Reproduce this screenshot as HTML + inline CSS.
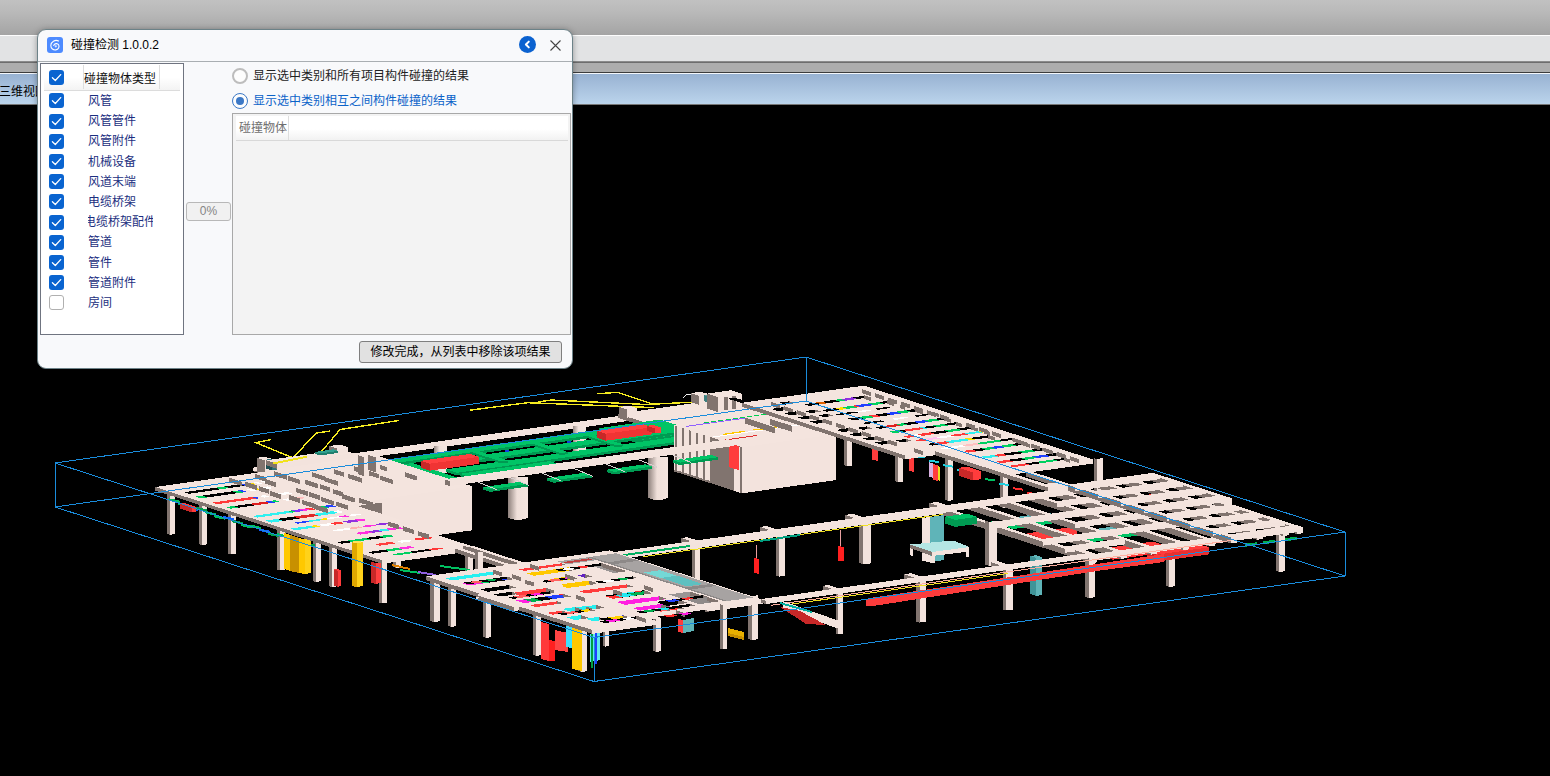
<!DOCTYPE html>
<html lang="zh-CN">
<head>
<meta charset="utf-8">
<title>碰撞检测</title>
<style>
*{box-sizing:border-box;margin:0;padding:0}
html,body{width:1550px;height:776px;overflow:hidden;background:#000;font-family:"Liberation Sans","Noto Sans CJK SC",sans-serif;font-size:12px;color:#000}
#bg-top{position:absolute;left:0;top:0;width:1550px;height:35px;background:linear-gradient(#c1c1c1,#b9b9b9 35%,#a4a4a4)}
#bg-l1{position:absolute;left:0;top:35px;width:1550px;height:1px;background:#fdfdfd}
#bg-strip{position:absolute;left:0;top:36px;width:1550px;height:26px;background:#e2e3e4}
#bg-l2{position:absolute;left:0;top:61px;width:1550px;height:2px;background:linear-gradient(#9a9a9a,#5f5f5f)}
#bg-band{position:absolute;left:0;top:63px;width:1550px;height:9px;background:#adadad}
#bg-l3{position:absolute;left:0;top:72px;width:1550px;height:1px;background:#3c3c3c}
#bg-l4{position:absolute;left:0;top:73px;width:1550px;height:1px;background:#f4f7fb}
#bg-tab{position:absolute;left:0;top:74px;width:1550px;height:30px;background:linear-gradient(#98b2d2,#bbd4ec)}
#bg-l5{position:absolute;left:0;top:104px;width:1550px;height:1px;background:#777}
#tabtxt{position:absolute;left:-1px;top:84px;font-size:12px;line-height:16px;white-space:nowrap;color:#000}
#model{position:absolute;left:0;top:0;width:1550px;height:776px}
#dlg{position:absolute;left:37px;top:29px;width:536px;height:340px;background:#f8f9fb;border:1px solid #6c8288;border-radius:9px;box-shadow:0 1px 6px rgba(0,0,0,.35);overflow:hidden}
#dlg .abs{position:absolute}
#tbar{left:0;top:0;width:534px;height:32px;border-bottom:1px solid #a9aeb2}
#ico{left:9px;top:7px;width:16px;height:16px}
#ttl{left:33px;top:7px;font-size:12px;line-height:16px;white-space:nowrap}
#back{left:481px;top:6px;width:17px;height:17px}
#cls{left:511px;top:9px;width:13px;height:13px}
#list{left:2px;top:33px;width:144px;height:272px;background:#fff;border:1px solid #6f7480}
#lhead{left:3px;top:1px;width:136px;height:26px;border-bottom:1px solid #dcdcdc;background:linear-gradient(#fff,#fff 50%,#f3f3f3)}
.vsep{position:absolute;top:0;width:1px;height:24px;background:#dedede}
.cb{position:absolute;left:8px;width:15px;height:15px;border-radius:3px;background:#0a64d0}
.cb.off{background:#fff;border:1px solid #b0b0b0}
.cb svg{position:absolute;left:0;top:0}
.lt{position:absolute;left:47px;font-size:12px;line-height:16px;color:#1c2f80;white-space:nowrap}
#pct{left:148px;top:172px;width:45px;height:19px;border:1px solid #b8b8b8;border-radius:3px;background:#f1f1f1;color:#858585;text-align:center;line-height:17px;font-size:12px}
.rd{position:absolute;left:194px;width:16px;height:16px;border-radius:50%;border:2px solid #bdbdbd;background:#fdfdfd}
.rd.on{border-color:#3b78c6;border-width:1.5px;background:#fdfdfd}
.rd.on i{position:absolute;left:2.5px;top:2.5px;width:8px;height:8px;border-radius:50%;background:#3b78c6}
.rt{position:absolute;left:215px;font-size:12px;line-height:16px;white-space:nowrap;color:#222}
#res{left:194px;top:83px;width:339px;height:222px;background:#f3f3f3;border:1px solid #a8a8a8}
#rhead{left:3px;top:2px;width:332px;height:25px;border-bottom:1px solid #d8d8d8;background:linear-gradient(#fff,#fff 55%,#f2f2f2)}
#rhead span{position:absolute;left:3px;top:4px;color:#6e6e6e;line-height:16px}
#btn{left:321px;top:311px;width:203px;height:22px;border:1px solid #7f7f7f;border-radius:3px;background:#e1e1e1;text-align:center;line-height:20px;font-size:12px;color:#000;white-space:nowrap}
</style>
</head>
<body>
<div id="bg-top"></div><div id="bg-l1"></div><div id="bg-strip"></div><div id="bg-l2"></div><div id="bg-band"></div><div id="bg-l3"></div><div id="bg-l4"></div><div id="bg-tab"></div><div id="bg-l5"></div>
<div id="tabtxt">三维视图</div>
<svg id="model" viewBox="0 0 1550 776" shape-rendering="crispEdges">
<defs><linearGradient id="cyl" x1="0" x2="1" y1="0" y2="0"><stop offset="0" stop-color="#8d807b"/><stop offset=".45" stop-color="#efe0da"/><stop offset="1" stop-color="#f4e5df"/></linearGradient></defs>
<polyline points="271.5,439.5 256.0,442.7 291.6,457.3" fill="none" stroke="#f6ec20" stroke-width="1.4"/>
<polyline points="330.3,431.0 316.6,433.0 292.4,458.0" fill="none" stroke="#f6ec20" stroke-width="1.4"/>
<polyline points="398.9,420.5 340.0,429.5 317.4,456.5" fill="none" stroke="#f6ec20" stroke-width="1.4"/>
<polyline points="278.7,461.3 317.4,456.5" fill="none" stroke="#f6ec20" stroke-width="2"/>
<polyline points="469.7,410.2 527.7,402.7 654.2,407.6" fill="none" stroke="#f6ec20" stroke-width="1.4"/>
<polyline points="538.0,402.0 551.0,400.0 646.5,404.5 695.5,402.0" fill="none" stroke="#f6ec20" stroke-width="1.4"/>
<polyline points="597.0,393.7 618.0,392.4 654.0,404.5" fill="none" stroke="#f6ec20" stroke-width="1.4"/>
<polyline points="683.0,398.0 686.0,395.0 694.0,394.0" fill="none" stroke="#eee" stroke-width="1"/>
<polygon points="365.0,451.8 370.0,453.4 370.0,457.4 365.0,455.8" fill="#81746f"/>
<polygon points="370.0,453.4 643.0,414.9 643.0,418.9 370.0,457.4" fill="#f3e3dd"/>
<polygon points="365.0,451.8 638.0,413.3 643.0,414.9 370.0,453.4" fill="#f4e4de"/>
<rect x="433.5" y="445.6" width="13.0" height="27.0" fill="url(#cyl)"/>
<ellipse cx="440.0" cy="472.6" rx="6.5" ry="1.8" fill="url(#cyl)"/>
<rect x="572.5" y="426.0" width="13.0" height="27.0" fill="url(#cyl)"/>
<ellipse cx="579.0" cy="453.0" rx="6.5" ry="1.8" fill="url(#cyl)"/>
<polygon points="618.0,413.8 728.0,398.3 728.0,402.3 618.0,417.8" fill="#f3e3dd"/>
<polygon points="728.0,398.3 753.0,406.3 753.0,410.3 728.0,402.3" fill="#81746f"/>
<polygon points="753.0,406.3 643.0,421.9 643.0,425.9 753.0,410.3" fill="#f3e3dd"/>
<polygon points="643.0,421.9 618.0,413.8 618.0,417.8 643.0,425.9" fill="#81746f"/>
<polygon points="618.0,413.8 728.0,398.3 753.0,406.3 643.0,421.9" fill="#f4e4de"/>
<polygon points="619.0,407.0 627.0,409.6 627.0,417.6 619.0,415.0" fill="#81746f"/>
<polygon points="627.0,409.6 637.0,408.2 637.0,416.2 627.0,417.6" fill="#f3e3dd"/>
<polygon points="619.0,407.0 629.0,405.6 637.0,408.2 627.0,409.6" fill="#f4e4de"/>
<polygon points="691.0,393.1 699.0,395.7 699.0,404.7 691.0,402.1" fill="#81746f"/>
<polygon points="699.0,395.7 709.0,394.3 709.0,403.3 699.0,404.7" fill="#f3e3dd"/>
<polygon points="691.0,393.1 701.0,391.7 709.0,394.3 699.0,395.7" fill="#f4e4de"/>
<polygon points="704.0,395.2 714.0,398.4 714.0,404.4 704.0,401.2" fill="#3f8080"/>
<polygon points="714.0,398.4 719.0,397.7 719.0,403.7 714.0,404.4" fill="#5fa0a0"/>
<polygon points="704.0,395.2 709.0,394.5 719.0,397.7 714.0,398.4" fill="#5fa0a0"/>
<polygon points="383.0,460.1 445.0,480.1 445.0,482.1 383.0,462.1" fill="#009a52"/>
<polygon points="445.0,480.1 459.0,478.1 459.0,480.1 445.0,482.1" fill="#009a52"/>
<polygon points="383.0,460.1 397.0,458.1 459.0,478.1 445.0,480.1" fill="#00c466"/>
<polygon points="383.0,460.1 393.0,463.3 393.0,465.8 383.0,462.6" fill="#009a52"/>
<polygon points="393.0,463.3 696.0,420.6 696.0,423.1 393.0,465.8" fill="#009a52"/>
<polygon points="383.0,460.1 686.0,417.3 696.0,420.6 393.0,463.3" fill="#00c466"/>
<polygon points="599.0,428.2 637.0,440.5 637.0,443.0 599.0,430.7" fill="#009a52"/>
<polygon points="637.0,440.5 717.0,429.2 717.0,431.7 637.0,443.0" fill="#009a52"/>
<polygon points="599.0,428.2 679.0,416.9 717.0,429.2 637.0,440.5" fill="#00c466"/>
<polygon points="429.0,462.4 439.0,465.6 439.0,468.1 429.0,464.9" fill="#009a52"/>
<polygon points="439.0,465.6 701.0,428.7 701.0,431.2 439.0,468.1" fill="#009a52"/>
<polygon points="429.0,462.4 691.0,425.4 701.0,428.7 439.0,465.6" fill="#00c466"/>
<polygon points="446.0,469.3 457.0,472.8 457.0,475.3 446.0,471.8" fill="#009a52"/>
<polygon points="457.0,472.8 712.0,436.8 712.0,439.3 457.0,475.3" fill="#009a52"/>
<polygon points="446.0,469.3 701.0,433.3 712.0,436.8 457.0,472.8" fill="#00c466"/>
<polygon points="460.0,473.8 468.0,476.4 468.0,478.9 460.0,476.3" fill="#009a52"/>
<polygon points="468.0,476.4 558.0,463.7 558.0,466.2 468.0,478.9" fill="#009a52"/>
<polygon points="460.0,473.8 550.0,461.1 558.0,463.7 468.0,476.4" fill="#00c466"/>
<polygon points="472.0,452.2 501.0,461.5 501.0,463.5 472.0,454.2" fill="#009a52"/>
<polygon points="501.0,461.5 508.0,460.5 508.0,462.5 501.0,463.5" fill="#009a52"/>
<polygon points="472.0,452.2 479.0,451.2 508.0,460.5 501.0,461.5" fill="#00c466"/>
<polygon points="532.0,443.7 561.0,453.1 561.0,455.1 532.0,445.7" fill="#009a52"/>
<polygon points="561.0,453.1 568.0,452.1 568.0,454.1 561.0,455.1" fill="#009a52"/>
<polygon points="532.0,443.7 539.0,442.7 568.0,452.1 561.0,453.1" fill="#00c466"/>
<polygon points="587.0,435.9 616.0,445.3 616.0,447.3 587.0,437.9" fill="#009a52"/>
<polygon points="616.0,445.3 623.0,444.3 623.0,446.3 616.0,447.3" fill="#009a52"/>
<polygon points="587.0,435.9 594.0,434.9 623.0,444.3 616.0,445.3" fill="#00c466"/>
<polygon points="437.0,459.5 441.0,459.5 441.0,461.5 437.0,461.5" fill="#1040e0"/>
<polygon points="505.0,449.9 509.0,449.9 509.0,451.9 505.0,451.9" fill="#1040e0"/>
<polygon points="567.0,441.1 571.0,441.1 571.0,443.1 567.0,443.1" fill="#1040e0"/>
<polygon points="630.0,432.3 634.0,432.3 634.0,434.3 630.0,434.3" fill="#1040e0"/>
<polygon points="675.0,425.9 679.0,425.9 679.0,427.9 675.0,427.9" fill="#1040e0"/>
<polygon points="421.0,460.8 430.0,463.7 430.0,470.7 421.0,467.8" fill="#c82828"/>
<polygon points="430.0,463.7 479.0,456.8 479.0,463.8 430.0,470.7" fill="#f03434"/>
<polygon points="421.0,460.8 470.0,453.9 479.0,456.8 430.0,463.7" fill="#ff4040"/>
<polygon points="597.0,430.8 606.0,433.7 606.0,440.7 597.0,437.8" fill="#c82828"/>
<polygon points="606.0,433.7 652.0,427.3 652.0,434.3 606.0,440.7" fill="#f03434"/>
<polygon points="597.0,430.8 643.0,424.3 652.0,427.3 606.0,433.7" fill="#ff4040"/>
<polygon points="347.0,487.7 382.0,499.0 382.0,543.0 347.0,531.7" fill="#81746f"/>
<polygon points="382.0,499.0 472.0,486.3 472.0,530.3 382.0,543.0" fill="#f3e3dd"/>
<polygon points="347.0,487.7 437.0,475.0 472.0,486.3 382.0,499.0" fill="#f4e4de"/>
<polygon points="167.0,489.9 169.8,490.8 169.8,534.8 167.0,533.9" fill="#81746f"/>
<polygon points="169.8,490.8 175.0,490.1 175.0,534.1 169.8,534.8" fill="#f3e3dd"/>
<polygon points="199.0,500.3 201.8,501.2 201.8,545.2 199.0,544.3" fill="#81746f"/>
<polygon points="201.8,501.2 207.0,500.4 207.0,544.4 201.8,545.2" fill="#f3e3dd"/>
<polygon points="228.0,509.6 230.8,510.5 230.8,554.5 228.0,553.6" fill="#81746f"/>
<polygon points="230.8,510.5 236.0,509.8 236.0,553.8 230.8,554.5" fill="#f3e3dd"/>
<polygon points="277.0,525.5 279.8,526.4 279.8,570.4 277.0,569.5" fill="#81746f"/>
<polygon points="279.8,526.4 285.0,525.6 285.0,569.6 279.8,570.4" fill="#f3e3dd"/>
<polygon points="313.0,537.1 315.8,538.0 315.8,582.0 313.0,581.1" fill="#81746f"/>
<polygon points="315.8,538.0 321.0,537.2 321.0,581.2 315.8,582.0" fill="#f3e3dd"/>
<polygon points="329.0,542.2 331.8,543.1 331.8,587.1 329.0,586.2" fill="#81746f"/>
<polygon points="331.8,543.1 337.0,542.4 337.0,586.4 331.8,587.1" fill="#f3e3dd"/>
<polygon points="379.0,558.4 381.8,559.3 381.8,603.3 379.0,602.4" fill="#81746f"/>
<polygon points="381.8,559.3 387.0,558.5 387.0,602.5 381.8,603.3" fill="#f3e3dd"/>
<polygon points="393.0,523.0 395.8,523.9 395.8,567.9 393.0,567.0" fill="#81746f"/>
<polygon points="395.8,523.9 401.0,523.2 401.0,567.2 395.8,567.9" fill="#f3e3dd"/>
<polygon points="465.0,546.2 467.8,547.1 467.8,591.1 465.0,590.2" fill="#81746f"/>
<polygon points="467.8,547.1 473.0,546.4 473.0,590.4 467.8,591.1" fill="#f3e3dd"/>
<polyline points="169.0,499.5 180.0,502.0" fill="none" stroke="#00c060" stroke-width="2.5"/>
<polyline points="178.0,503.4 189.0,505.9" fill="none" stroke="#00c060" stroke-width="2.5"/>
<polyline points="187.0,507.3 198.0,509.8" fill="none" stroke="#1060ff" stroke-width="2.5"/>
<polyline points="196.0,508.2 207.0,510.7" fill="none" stroke="#00a050" stroke-width="2.5"/>
<polyline points="205.0,512.1 216.0,514.6" fill="none" stroke="#00c060" stroke-width="2.5"/>
<polyline points="214.0,516.0 225.0,518.5" fill="none" stroke="#00c060" stroke-width="2.5"/>
<polyline points="223.0,517.0 234.0,519.5" fill="none" stroke="#1060ff" stroke-width="2.5"/>
<polyline points="232.0,520.9 243.0,523.4" fill="none" stroke="#00a050" stroke-width="2.5"/>
<polyline points="241.0,524.8 252.0,527.3" fill="none" stroke="#00c060" stroke-width="2.5"/>
<polyline points="250.0,525.7 261.0,528.2" fill="none" stroke="#00c060" stroke-width="2.5"/>
<polyline points="259.0,529.6 270.0,532.1" fill="none" stroke="#1060ff" stroke-width="2.5"/>
<polyline points="268.0,533.5 279.0,536.0" fill="none" stroke="#00a050" stroke-width="2.5"/>
<polyline points="277.0,534.4 288.0,536.9" fill="none" stroke="#00c060" stroke-width="2.5"/>
<polyline points="286.0,538.3 297.0,540.8" fill="none" stroke="#00c060" stroke-width="2.5"/>
<polyline points="295.0,542.2 306.0,544.7" fill="none" stroke="#1060ff" stroke-width="2.5"/>
<polyline points="304.0,543.1 315.0,545.6" fill="none" stroke="#00a050" stroke-width="2.5"/>
<polygon points="180.0,503.5 192.0,507.4 192.0,512.4 180.0,508.5" fill="#c82828"/>
<polygon points="192.0,507.4 196.0,506.8 196.0,511.8 192.0,512.4" fill="#ff3c3c"/>
<polygon points="180.0,503.5 184.0,503.0 196.0,506.8 192.0,507.4" fill="#ff3c3c"/>
<polygon points="284.0,533.0 290.0,535.0 290.0,571.0 284.0,569.0" fill="#ffc800"/>
<polygon points="290.0,535.0 299.0,538.0 299.0,573.0 290.0,571.0" fill="#c89000"/>
<polygon points="299.0,538.0 305.0,539.5 305.0,574.0 299.0,573.0" fill="#ffc800"/>
<polygon points="305.0,539.5 311.0,538.5 311.0,573.0 305.0,574.0" fill="#ffd21a"/>
<polygon points="371.0,562.0 376.0,563.0 376.0,584.0 371.0,583.0" fill="#c82828"/>
<polygon points="376.0,563.0 380.6,562.0 380.6,583.0 376.0,584.0" fill="#ff4040"/>
<polygon points="334.0,569.4 338.0,570.7 338.0,586.7 334.0,585.4" fill="#c82828"/>
<polygon points="338.0,570.7 341.0,570.3 341.0,586.3 338.0,586.7" fill="#ff3c3c"/>
<polygon points="334.0,569.4 337.0,569.0 341.0,570.3 338.0,570.7" fill="#ff3c3c"/>
<polygon points="155.0,487.0 265.0,471.5 265.0,475.0 155.0,490.5" fill="#f3e3dd"/>
<polygon points="265.0,471.5 253.0,467.6 253.0,471.1 265.0,475.0" fill="#81746f"/>
<polygon points="253.0,467.6 365.0,451.8 365.0,455.3 253.0,471.1" fill="#f3e3dd"/>
<polygon points="365.0,451.8 472.0,486.3 472.0,489.8 365.0,455.3" fill="#81746f"/>
<polygon points="472.0,486.3 350.0,503.6 350.0,507.1 472.0,489.8" fill="#f3e3dd"/>
<polygon points="350.0,503.6 405.0,521.3 405.0,524.8 350.0,507.1" fill="#81746f"/>
<polygon points="405.0,521.3 398.0,522.3 398.0,525.8 405.0,524.8" fill="#f3e3dd"/>
<polygon points="398.0,522.3 475.0,547.2 475.0,550.7 398.0,525.8" fill="#81746f"/>
<polygon points="475.0,547.2 382.0,560.3 382.0,563.8 475.0,550.7" fill="#f3e3dd"/>
<polygon points="382.0,560.3 155.0,487.0 155.0,490.5 382.0,563.8" fill="#81746f"/>
<polygon points="155.0,487.0 265.0,471.5 253.0,467.6 365.0,451.8 472.0,486.3 350.0,503.6 405.0,521.3 398.0,522.3 475.0,547.2 382.0,560.3" fill="#f4e4de"/>
<polygon points="184.0,492.2 215.8,487.7 220.8,489.3 189.0,493.8" fill="#000"/>
<polygon points="215.8,487.7 224.9,486.4 229.9,488.0 220.8,489.3" fill="#00d060"/>
<polygon points="224.9,486.4 240.4,484.2 245.4,485.8 229.9,488.0" fill="#000"/>
<polygon points="240.4,484.2 244.1,483.7 249.1,485.3 245.4,485.8" fill="#2040ff"/>
<polygon points="247.7,483.2 251.3,482.7 256.3,484.3 252.7,484.8" fill="#ffe000"/>
<polygon points="253.2,482.4 256.8,481.9 261.8,483.5 258.2,484.0" fill="#ffffff"/>
<polygon points="260.4,481.4 265.9,480.6 270.9,482.2 265.4,483.0" fill="#ffffff"/>
<polygon points="195.0,496.7 202.4,495.6 207.9,497.4 200.5,498.4" fill="#00d060"/>
<polygon points="202.4,495.6 232.2,491.4 237.7,493.2 207.9,497.4" fill="#000"/>
<polygon points="232.2,491.4 237.8,490.6 243.3,492.4 237.7,493.2" fill="#00d060"/>
<polygon points="237.8,490.6 241.5,490.1 247.0,491.9 243.3,492.4" fill="#2040ff"/>
<polygon points="246.2,489.4 250.8,488.8 256.3,490.6 251.7,491.2" fill="#ffffff"/>
<polygon points="253.6,488.4 256.4,488.0 261.9,489.8 259.1,490.2" fill="#ffe000"/>
<polygon points="260.1,487.5 267.5,486.4 273.0,488.2 265.6,489.3" fill="#ffffff"/>
<polygon points="212.0,502.6 251.5,497.0 256.5,498.7 217.0,504.2" fill="#ff3838"/>
<polygon points="251.5,497.0 255.2,496.5 260.2,498.1 256.5,498.7" fill="#2040ff"/>
<polygon points="259.0,496.0 264.6,495.2 269.6,496.8 264.0,497.6" fill="#ffffff"/>
<polygon points="268.4,494.7 272.2,494.1 277.2,495.7 273.4,496.3" fill="#ffb0b0"/>
<polygon points="277.8,493.3 287.2,492.0 292.2,493.6 282.8,494.9" fill="#ffffff"/>
<polygon points="226.0,507.1 233.5,506.1 238.5,507.7 231.0,508.7" fill="#00d060"/>
<polygon points="233.5,506.1 249.5,503.8 254.5,505.4 238.5,507.7" fill="#000"/>
<polygon points="249.5,503.8 265.5,501.6 270.5,503.2 254.5,505.4" fill="#e02020"/>
<polygon points="265.5,501.6 270.2,500.9 275.2,502.5 270.5,503.2" fill="#2040ff"/>
<polygon points="270.2,500.9 274.9,500.2 279.9,501.9 275.2,502.5" fill="#00d060"/>
<polygon points="282.4,499.2 288.0,498.4 293.0,500.0 287.4,500.8" fill="#ffffff"/>
<polygon points="293.7,497.6 301.2,496.5 306.2,498.1 298.7,499.2" fill="#ffc0c0"/>
<polygon points="252.0,516.0 287.6,511.0 292.6,512.6 257.0,517.6" fill="#30f0f0"/>
<polygon points="287.6,511.0 291.5,510.4 296.5,512.0 292.6,512.6" fill="#00d060"/>
<polygon points="291.5,510.4 299.4,509.3 304.4,510.9 296.5,512.0" fill="#8030ff"/>
<polygon points="299.4,509.3 305.7,508.4 310.7,510.0 304.4,510.9" fill="#ff30e0"/>
<polygon points="305.7,508.4 310.5,507.7 315.5,509.4 310.7,510.0" fill="#ff3838"/>
<polygon points="315.2,507.1 323.1,506.0 328.1,507.6 320.2,508.7" fill="#00d060"/>
<polygon points="323.1,506.0 331.0,504.8 336.0,506.5 328.1,507.6" fill="#2040ff"/>
<polygon points="265.0,520.7 277.0,519.0 283.0,520.9 271.0,522.6" fill="#30f0f0"/>
<polygon points="277.0,519.0 293.0,516.7 299.0,518.6 283.0,520.9" fill="#000"/>
<polygon points="293.0,516.7 313.0,513.9 319.0,515.8 299.0,518.6" fill="#e02828"/>
<polygon points="313.0,513.9 333.0,511.1 339.0,513.0 319.0,515.8" fill="#30f0f0"/>
<polygon points="333.0,511.1 338.6,510.3 344.6,512.2 339.0,513.0" fill="#ffffff"/>
<polygon points="294.0,522.6 306.8,520.8 310.3,521.9 297.5,523.7" fill="#2040ff"/>
<polygon points="306.8,520.8 319.6,519.0 323.1,520.1 310.3,521.9" fill="#30f0f0"/>
<polygon points="319.6,519.0 326.0,518.1 329.5,519.2 323.1,520.1" fill="#ffe000"/>
<polygon points="326.0,518.1 338.8,516.3 342.3,517.4 329.5,519.2" fill="#ffffff"/>
<polygon points="338.8,516.3 345.2,515.4 348.7,516.5 342.3,517.4" fill="#ff30e0"/>
<polygon points="348.4,514.9 358.0,513.6 361.5,514.7 351.9,516.0" fill="#ffffff"/>
<polygon points="290.0,528.7 310.0,525.9 315.0,527.5 295.0,530.3" fill="#30f0f0"/>
<polygon points="310.0,525.9 315.6,525.1 320.6,526.7 315.0,527.5" fill="#ffe000"/>
<polygon points="318.8,524.7 330.0,523.1 335.0,524.7 323.8,526.3" fill="#ffffff"/>
<polygon points="330.0,523.1 339.6,521.7 344.6,523.3 335.0,524.7" fill="#ff3838"/>
<polygon points="342.8,521.3 354.0,519.7 359.0,521.3 347.8,522.9" fill="#9030e0"/>
<polygon points="354.0,519.7 362.0,518.6 367.0,520.2 359.0,521.3" fill="#ff30e0"/>
<polygon points="332.0,530.2 348.2,527.9 352.2,529.2 336.0,531.5" fill="#ffffff"/>
<polygon points="348.2,527.9 359.0,526.4 363.0,527.7 352.2,529.2" fill="#ffb0b0"/>
<polygon points="361.7,526.0 372.5,524.5 376.5,525.8 365.7,527.3" fill="#ff30e0"/>
<polygon points="375.2,524.1 386.0,522.6 390.0,523.9 379.2,525.4" fill="#9030e0"/>
<polygon points="355.0,533.0 368.2,531.1 373.2,532.8 360.0,534.6" fill="#ff30e0"/>
<polygon points="368.2,531.1 377.0,529.9 382.0,531.5 373.2,532.8" fill="#9030e0"/>
<polygon points="377.0,529.9 385.8,528.7 390.8,530.3 382.0,531.5" fill="#30f0f0"/>
<polygon points="385.8,528.7 399.0,526.8 404.0,528.4 390.8,530.3" fill="#ff30e0"/>
<polygon points="337.0,542.0 347.4,540.6 352.4,542.2 342.0,543.7" fill="#000"/>
<polygon points="347.4,540.6 365.6,538.0 370.6,539.6 352.4,542.2" fill="#00d060"/>
<polygon points="365.6,538.0 378.6,536.2 383.6,537.8 370.6,539.6" fill="#000"/>
<polygon points="378.6,536.2 389.0,534.7 394.0,536.3 383.6,537.8" fill="#00d060"/>
<polygon points="375.0,544.1 391.2,541.8 396.2,543.4 380.0,545.7" fill="#ff4040"/>
<polygon points="396.6,541.1 407.4,539.5 412.4,541.1 401.6,542.7" fill="#ffffff"/>
<polygon points="412.8,538.8 429.0,536.5 434.0,538.1 417.8,540.4" fill="#ff3838"/>
<polygon points="368.0,552.0 384.8,549.7 389.8,551.3 373.0,553.7" fill="#000"/>
<polygon points="384.8,549.7 397.4,547.9 402.4,549.5 389.8,551.3" fill="#00d060"/>
<polygon points="397.4,547.9 410.0,546.1 415.0,547.7 402.4,549.5" fill="#ff30e0"/>
<polygon points="392.0,554.2 410.0,551.7 414.0,553.0 396.0,555.5" fill="#00d060"/>
<polygon points="410.0,551.7 428.0,549.1 432.0,550.4 414.0,553.0" fill="#000"/>
<polygon points="428.0,549.1 440.0,547.5 444.0,548.7 432.0,550.4" fill="#ff3838"/>
<polygon points="228.9,477.5 241.5,481.6 241.5,486.1 228.9,482.0" fill="#81746f"/>
<polygon points="245.2,481.7 256.7,485.4 256.7,489.9 245.2,486.2" fill="#81746f"/>
<polygon points="259.0,486.2 269.2,489.5 269.2,494.0 259.0,490.7" fill="#81746f"/>
<polygon points="270.4,491.1 280.8,494.5 280.8,499.0 270.4,495.6" fill="#81746f"/>
<polygon points="289.0,495.0 299.5,498.4 299.5,502.9 289.0,499.5" fill="#81746f"/>
<polygon points="301.8,499.7 315.6,504.1 315.6,508.6 301.8,504.2" fill="#81746f"/>
<polygon points="314.4,504.4 328.3,508.9 328.3,513.4 314.4,508.9" fill="#81746f"/>
<polygon points="255.2,473.8 266.3,477.4 266.3,481.9 255.2,478.3" fill="#81746f"/>
<polygon points="264.7,478.9 275.9,482.6 275.9,487.1 264.7,483.4" fill="#81746f"/>
<polygon points="295.5,487.6 308.0,491.6 308.0,496.1 295.5,492.1" fill="#81746f"/>
<polygon points="309.3,492.1 319.5,495.4 319.5,499.9 309.3,496.6" fill="#81746f"/>
<polygon points="321.2,496.9 334.0,501.1 334.0,505.6 321.2,501.4" fill="#81746f"/>
<polygon points="335.9,501.4 348.2,505.4 348.2,509.9 335.9,505.9" fill="#81746f"/>
<polygon points="273.8,471.2 287.0,475.4 287.0,479.9 273.8,475.7" fill="#81746f"/>
<polygon points="287.5,475.7 299.8,479.7 299.8,484.2 287.5,480.2" fill="#81746f"/>
<polygon points="305.3,479.7 318.2,483.9 318.2,488.4 305.3,484.2" fill="#81746f"/>
<polygon points="319.9,484.1 330.4,487.5 330.4,492.0 319.9,488.6" fill="#81746f"/>
<polygon points="332.5,488.9 343.2,492.3 343.2,496.8 332.5,493.4" fill="#81746f"/>
<polygon points="342.2,494.0 354.9,498.1 354.9,502.6 342.2,498.5" fill="#81746f"/>
<polygon points="359.4,498.0 372.9,502.4 372.9,506.9 359.4,502.5" fill="#81746f"/>
<polygon points="312.2,472.2 324.5,476.2 324.5,480.7 312.2,476.7" fill="#81746f"/>
<polygon points="324.7,477.0 338.1,481.3 338.1,485.8 324.7,481.5" fill="#81746f"/>
<polygon points="334.0,469.2 344.2,472.5 344.2,477.0 334.0,473.7" fill="#81746f"/>
<polygon points="347.9,473.7 361.9,478.2 361.9,482.7 347.9,478.2" fill="#81746f"/>
<polygon points="354.3,466.3 367.0,470.4 367.0,474.9 354.3,470.8" fill="#81746f"/>
<polygon points="368.8,470.8 379.4,474.2 379.4,478.7 368.8,475.3" fill="#81746f"/>
<polygon points="380.4,475.6 393.4,479.8 393.4,484.3 380.4,480.1" fill="#81746f"/>
<polygon points="375.5,463.3 387.0,467.0 387.0,471.5 375.5,467.8" fill="#81746f"/>
<polygon points="404.7,472.2 416.9,476.1 416.9,480.6 404.7,476.7" fill="#81746f"/>
<polygon points="388.0,521.4 399.0,524.9 399.0,529.4 388.0,525.9" fill="#81746f"/>
<polygon points="403.0,526.2 414.0,529.8 414.0,534.3 403.0,530.7" fill="#81746f"/>
<polygon points="418.0,531.1 429.0,534.6 429.0,539.1 418.0,535.6" fill="#81746f"/>
<polygon points="463.0,545.6 474.0,549.1 474.0,553.6 463.0,550.1" fill="#81746f"/>
<polygon points="351.5,542.0 357.0,543.0 357.0,587.0 351.5,586.0" fill="#e0a800"/>
<polygon points="357.0,543.0 363.0,542.0 363.0,586.0 357.0,587.0" fill="#ffd21a"/>
<polygon points="351.5,542.0 357.0,540.5 363.0,542.0 357.0,543.5" fill="#ffe060"/>
<polygon points="257.0,457.8 265.0,460.4 265.0,472.4 257.0,469.8" fill="#81746f"/>
<polygon points="265.0,460.4 273.0,459.3 273.0,471.3 265.0,472.4" fill="#f3e3dd"/>
<polygon points="257.0,457.8 265.0,456.7 273.0,459.3 265.0,460.4" fill="#f4e4de"/>
<polygon points="266.0,459.6 272.0,461.5 272.0,470.5 266.0,468.6" fill="#1f5055"/>
<polygon points="272.0,461.5 277.0,460.8 277.0,469.8 272.0,470.5" fill="#2e7076"/>
<polygon points="266.0,459.6 271.0,458.8 277.0,460.8 272.0,461.5" fill="#2e7076"/>
<polygon points="266.0,460.3 277.0,463.9 277.0,468.9 266.0,465.3" fill="#81746f"/>
<polygon points="277.0,463.9 353.0,453.1 353.0,458.1 277.0,468.9" fill="#f3e3dd"/>
<polygon points="266.0,460.3 342.0,449.6 353.0,453.1 277.0,463.9" fill="#f4e4de"/>
<polygon points="329.0,446.0 337.0,448.6 337.0,453.6 329.0,451.0" fill="#81746f"/>
<polygon points="337.0,448.6 348.0,447.1 348.0,452.1 337.0,453.6" fill="#f3e3dd"/>
<polygon points="329.0,446.0 340.0,444.5 348.0,447.1 337.0,448.6" fill="#f4e4de"/>
<polygon points="358.0,455.2 364.0,457.1 364.0,476.1 358.0,474.2" fill="#81746f"/>
<polygon points="364.0,457.1 368.0,456.6 368.0,475.6 364.0,476.1" fill="#f3e3dd"/>
<polygon points="368.0,454.8 376.0,457.4 376.0,472.4 368.0,469.8" fill="#81746f"/>
<polygon points="376.0,457.4 380.0,456.8 380.0,471.8 376.0,472.4" fill="#f3e3dd"/>
<polyline points="273.0,463.5 307.0,456.8" fill="none" stroke="#f2e21c" stroke-width="2"/>
<polygon points="315.0,451.9 320.0,453.5 320.0,455.5 315.0,453.9" fill="#208070"/>
<polygon points="320.0,453.5 338.0,450.9 338.0,452.9 320.0,455.5" fill="#208070"/>
<polygon points="315.0,451.9 333.0,449.3 338.0,450.9 320.0,453.5" fill="#30a090"/>
<polygon points="660.0,419.5 753.0,406.3 771.0,412.1 678.0,425.3" fill="#f4e4de"/>
<polygon points="674.0,425.4 742.0,447.3 742.0,493.3 674.0,471.4" fill="#81746f"/>
<polygon points="742.0,447.3 836.0,434.1 836.0,480.1 742.0,493.3" fill="#f3e3dd"/>
<polygon points="674.0,425.4 768.0,412.1 836.0,434.1 742.0,447.3" fill="#f4e4de"/>
<polygon points="674.0,425.4 711.0,437.3 711.0,481.3 674.0,469.4" fill="#f3e3dd"/>
<polygon points="675.0,425.7 676.5,426.2 676.5,470.2 675.0,469.7" fill="#81746f"/>
<polygon points="682.0,427.9 683.5,428.4 683.5,472.4 682.0,471.9" fill="#81746f"/>
<polygon points="689.0,430.2 690.5,430.7 690.5,474.7 689.0,474.2" fill="#81746f"/>
<polygon points="696.0,432.5 697.5,433.0 697.5,477.0 696.0,476.5" fill="#81746f"/>
<polygon points="703.0,434.7 704.5,435.2 704.5,479.2 703.0,478.7" fill="#81746f"/>
<polygon points="710.0,437.0 711.5,437.5 711.5,481.5 710.0,481.0" fill="#81746f"/>
<polygon points="734.0,444.7 740.0,446.7 740.0,492.7 734.0,490.7" fill="#f3e3dd"/>
<polygon points="707.0,393.6 718.0,397.2 718.0,412.2 707.0,408.6" fill="#81746f"/>
<polygon points="718.0,397.2 742.0,393.8 742.0,408.8 718.0,412.2" fill="#f3e3dd"/>
<polygon points="707.0,393.6 731.0,390.2 742.0,393.8 718.0,397.2" fill="#f4e4de"/>
<polygon points="724.0,397.3 728.0,396.8 728.0,409.8 724.0,410.3" fill="#81746f"/>
<polygon points="732.0,396.2 736.0,395.6 736.0,408.6 732.0,409.2" fill="#81746f"/>
<polygon points="728.0,398.7 735.0,397.7 763.0,406.8 756.0,407.8" fill="#000"/>
<polygon points="729.0,443.1 739.0,446.3 739.0,470.3 729.0,467.1" fill="#ff3c3c"/>
<polygon points="685.0,426.1 745.0,417.7 747.0,418.3 687.0,426.8" fill="#9060ff"/>
<polygon points="703.0,422.7 768.0,413.5 769.5,414.0 704.5,423.2" fill="#00d050"/>
<polygon points="721.0,434.0 743.0,430.9 746.0,431.9 724.0,435.0" fill="#ffc800"/>
<polygon points="753.0,429.5 778.0,426.0 781.0,427.0 756.0,430.5" fill="#ffc800"/>
<polyline points="713.0,437.0 803.0,424.3" fill="none" stroke="#fff" stroke-width="1"/>
<polyline points="723.0,440.3 757.0,435.5" fill="none" stroke="#e03030" stroke-width="1"/>
<polygon points="647.0,425.8 655.0,428.4 655.0,433.4 647.0,430.8" fill="#c82828"/>
<polygon points="655.0,428.4 661.0,427.5 661.0,432.5 655.0,433.4" fill="#ff3c3c"/>
<polygon points="647.0,425.8 653.0,424.9 661.0,427.5 655.0,428.4" fill="#ff3c3c"/>
<polygon points="745.0,417.7 775.0,427.4 775.0,433.4 745.0,423.7" fill="#81746f"/>
<polygon points="770.0,418.8 792.0,425.9 792.0,431.9 770.0,424.8" fill="#81746f"/>
<rect x="508.0" y="476.9" width="20.0" height="40.0" fill="url(#cyl)"/>
<ellipse cx="518.0" cy="516.9" rx="10.0" ry="2.8" fill="url(#cyl)"/>
<rect x="648.0" y="457.1" width="20.0" height="40.0" fill="url(#cyl)"/>
<ellipse cx="658.0" cy="497.1" rx="10.0" ry="2.8" fill="url(#cyl)"/>
<polygon points="483.0,487.1 490.0,489.4 490.0,491.9 483.0,489.6" fill="#009a52"/>
<polygon points="490.0,489.4 528.0,484.0 528.0,486.5 490.0,491.9" fill="#009a52"/>
<polygon points="483.0,487.1 521.0,481.7 528.0,484.0 490.0,489.4" fill="#00c466"/>
<polygon points="547.0,478.1 554.0,480.3 554.0,482.8 547.0,480.6" fill="#009a52"/>
<polygon points="554.0,480.3 592.0,475.0 592.0,477.5 554.0,482.8" fill="#009a52"/>
<polygon points="547.0,478.1 585.0,472.7 592.0,475.0 554.0,480.3" fill="#00c466"/>
<polygon points="607.0,469.6 614.0,471.9 614.0,474.4 607.0,472.1" fill="#009a52"/>
<polygon points="614.0,471.9 652.0,466.5 652.0,469.0 614.0,474.4" fill="#009a52"/>
<polygon points="607.0,469.6 645.0,464.3 652.0,466.5 614.0,471.9" fill="#00c466"/>
<polygon points="673.0,460.3 680.0,462.6 680.0,465.1 673.0,462.8" fill="#009a52"/>
<polygon points="680.0,462.6 718.0,457.2 718.0,459.7 680.0,465.1" fill="#009a52"/>
<polygon points="673.0,460.3 711.0,454.9 718.0,457.2 680.0,462.6" fill="#00c466"/>
<polyline points="475.0,480.8 497.0,489.8" fill="none" stroke="#d8d0d0" stroke-width="1"/>
<polyline points="507.0,476.3 529.0,485.3" fill="none" stroke="#d8d0d0" stroke-width="1"/>
<polyline points="539.0,471.8 561.0,480.8" fill="none" stroke="#d8d0d0" stroke-width="1"/>
<polyline points="571.0,467.3 593.0,476.3" fill="none" stroke="#d8d0d0" stroke-width="1"/>
<polyline points="603.0,462.8 625.0,471.8" fill="none" stroke="#d8d0d0" stroke-width="1"/>
<polyline points="635.0,458.2 657.0,467.2" fill="none" stroke="#d8d0d0" stroke-width="1"/>
<polyline points="669.0,453.4 691.0,462.4" fill="none" stroke="#d8d0d0" stroke-width="1"/>
<polygon points="444.5,479.3 450.0,481.1 450.0,486.1 444.5,484.3" fill="#81746f"/>
<polygon points="450.0,481.1 734.0,441.0 734.0,446.0 450.0,486.1" fill="#f3e3dd"/>
<polygon points="444.5,479.3 728.5,439.2 734.0,441.0 450.0,481.1" fill="#f4e4de"/>
<polygon points="844.4,421.2 847.2,422.1 847.2,466.1 844.4,465.2" fill="#81746f"/>
<polygon points="847.2,422.1 852.4,421.4 852.4,465.4 847.2,466.1" fill="#f3e3dd"/>
<polygon points="895.2,437.3 898.0,438.2 898.0,482.2 895.2,481.3" fill="#81746f"/>
<polygon points="898.0,438.2 903.2,437.5 903.2,481.5 898.0,482.2" fill="#f3e3dd"/>
<polygon points="945.2,456.0 948.0,456.9 948.0,500.9 945.2,500.0" fill="#81746f"/>
<polygon points="948.0,456.9 953.2,456.2 953.2,500.2 948.0,500.9" fill="#f3e3dd"/>
<polygon points="1000.0,463.0 1002.8,463.9 1002.8,507.9 1000.0,507.0" fill="#81746f"/>
<polygon points="1002.8,463.9 1008.0,463.2 1008.0,507.2 1002.8,507.9" fill="#f3e3dd"/>
<polygon points="872.0,448.0 878.0,449.5 878.0,461.0 872.0,459.5" fill="#ff3c3c"/>
<polygon points="909.0,457.0 914.0,458.5 914.0,472.0 909.0,470.5" fill="#ff3c3c"/>
<polygon points="929.0,462.0 933.0,463.5 933.0,478.0 929.0,476.5" fill="#d8b0e0"/>
<polygon points="933.0,464.0 938.0,465.5 938.0,481.0 933.0,479.5" fill="#ff3c3c"/>
<polygon points="938.0,466.0 940.0,467.5 940.0,481.0 938.0,479.5" fill="#e8e020"/>
<polyline points="915.0,456.0 925.0,457.5" fill="none" stroke="#20d0e0" stroke-width="2"/>
<polyline points="929.0,460.6 939.0,462.1" fill="none" stroke="#20d0e0" stroke-width="2"/>
<polyline points="943.0,465.2 953.0,466.7" fill="none" stroke="#20d0e0" stroke-width="2"/>
<polyline points="957.0,469.8 967.0,471.3" fill="none" stroke="#20d0e0" stroke-width="2"/>
<polyline points="971.0,474.4 981.0,475.9" fill="none" stroke="#00c060" stroke-width="2"/>
<polyline points="985.0,479.0 995.0,480.5" fill="none" stroke="#00c060" stroke-width="2"/>
<polyline points="999.0,483.6 1009.0,485.1" fill="none" stroke="#20d0e0" stroke-width="2"/>
<polyline points="1013.0,488.2 1023.0,489.7" fill="none" stroke="#ff3030" stroke-width="2"/>
<polyline points="1027.0,492.8 1037.0,494.3" fill="none" stroke="#ff3030" stroke-width="2"/>
<polygon points="959.0,467.8 973.0,472.4 973.0,480.4 959.0,475.8" fill="#c82828"/>
<polygon points="973.0,472.4 981.0,471.2 981.0,479.2 973.0,480.4" fill="#ff3c3c"/>
<polygon points="959.0,467.8 967.0,466.7 981.0,471.2 973.0,472.4" fill="#ff3c3c"/>
<polygon points="742.0,402.8 864.0,385.6 864.0,389.6 742.0,406.8" fill="#f3e3dd"/>
<polygon points="864.0,385.6 1093.0,459.5 1093.0,463.5 864.0,389.6" fill="#81746f"/>
<polygon points="1093.0,459.5 1001.0,472.5 1001.0,476.5 1093.0,463.5" fill="#f3e3dd"/>
<polygon points="1001.0,472.5 935.0,451.2 935.0,455.2 1001.0,476.5" fill="#81746f"/>
<polygon points="935.0,451.2 905.0,455.4 905.0,459.4 935.0,455.2" fill="#f3e3dd"/>
<polygon points="905.0,455.4 742.0,402.8 742.0,406.8 905.0,459.4" fill="#81746f"/>
<polygon points="742.0,402.8 864.0,385.6 1093.0,459.5 1001.0,472.5 935.0,451.2 905.0,455.4" fill="#f4e4de"/>
<polygon points="804.0,404.2 816.2,402.5 821.3,404.2 809.1,405.9" fill="#000"/>
<polygon points="816.2,402.5 822.3,401.7 827.4,403.3 821.3,404.2" fill="#e06000"/>
<polygon points="822.3,401.7 834.5,399.9 839.6,401.6 827.4,403.3" fill="#000"/>
<polygon points="834.5,399.9 840.6,399.1 845.7,400.7 839.6,401.6" fill="#00d060"/>
<polygon points="840.6,399.1 852.8,397.3 857.9,399.0 845.7,400.7" fill="#9030e0"/>
<polygon points="852.8,397.3 865.1,395.6 870.2,397.3 857.9,399.0" fill="#000"/>
<polygon points="864.1,395.3 871.1,397.6 871.1,401.1 864.1,398.8" fill="#81746f"/>
<polygon points="822.0,410.1 835.3,408.2 840.4,409.8 827.1,411.7" fill="#000"/>
<polygon points="835.3,408.2 841.9,407.2 847.0,408.9 840.4,409.8" fill="#ffe000"/>
<polygon points="841.9,407.2 851.9,405.8 857.0,407.5 847.0,408.9" fill="#00d060"/>
<polygon points="851.9,405.8 855.2,405.4 860.3,407.0 857.0,407.5" fill="#ff3838"/>
<polygon points="855.2,405.4 868.5,403.5 873.6,405.1 860.3,407.0" fill="#2040ff"/>
<polygon points="868.5,403.5 878.5,402.1 883.6,403.7 873.6,405.1" fill="#00d060"/>
<polygon points="878.5,402.1 888.4,400.7 893.5,402.3 883.6,403.7" fill="#000"/>
<polygon points="887.4,400.4 894.4,402.6 894.4,406.1 887.4,403.9" fill="#81746f"/>
<polygon points="835.0,414.2 854.7,411.5 858.1,412.6 838.4,415.3" fill="#000"/>
<polygon points="854.7,411.5 867.9,409.6 871.3,410.7 858.1,412.6" fill="#ffffff"/>
<polygon points="874.5,408.7 887.6,406.8 891.0,407.9 877.9,409.8" fill="#000"/>
<polygon points="899.8,404.6 904.8,406.3 904.8,409.8 899.8,408.1" fill="#81746f"/>
<polygon points="848.0,418.4 858.3,417.0 863.8,418.8 853.5,420.2" fill="#000"/>
<polygon points="858.3,417.0 868.5,415.5 874.0,417.3 863.8,418.8" fill="#00d060"/>
<polygon points="868.5,415.5 875.3,414.6 880.9,416.4 874.0,417.3" fill="#ff3838"/>
<polygon points="875.3,414.6 885.6,413.1 891.1,414.9 880.9,416.4" fill="#000"/>
<polygon points="885.6,413.1 895.9,411.7 901.4,413.5 891.1,414.9" fill="#2040ff"/>
<polygon points="895.9,411.7 906.1,410.2 911.6,412.0 901.4,413.5" fill="#00d060"/>
<polygon points="906.1,410.2 916.4,408.8 921.9,410.6 911.6,412.0" fill="#000"/>
<polygon points="915.4,408.5 922.9,410.9 922.9,414.4 915.4,412.0" fill="#81746f"/>
<polygon points="862.0,423.0 880.3,420.4 883.7,421.5 865.4,424.1" fill="#000"/>
<polygon points="891.4,418.8 906.0,416.7 909.4,417.8 894.8,419.9" fill="#ffffff"/>
<polygon points="913.4,415.7 935.4,412.6 938.8,413.7 916.8,416.8" fill="#000"/>
<polygon points="934.4,412.3 939.4,413.9 939.4,417.4 934.4,415.8" fill="#81746f"/>
<polygon points="875.0,427.2 882.0,426.2 887.1,427.8 880.1,428.8" fill="#000"/>
<polygon points="882.0,426.2 896.0,424.2 901.1,425.8 887.1,427.8" fill="#e02020"/>
<polygon points="896.0,424.2 903.0,423.2 908.1,424.9 901.1,425.8" fill="#00d060"/>
<polygon points="903.0,423.2 913.5,421.7 918.6,423.4 908.1,424.9" fill="#000"/>
<polygon points="913.5,421.7 924.0,420.2 929.1,421.9 918.6,423.4" fill="#2040ff"/>
<polygon points="924.0,420.2 934.5,418.8 939.6,420.4 929.1,421.9" fill="#00d060"/>
<polygon points="934.5,418.8 945.0,417.3 950.1,418.9 939.6,420.4" fill="#000"/>
<polygon points="944.0,417.0 951.0,419.2 951.0,422.7 944.0,420.5" fill="#81746f"/>
<polygon points="889.0,431.7 899.2,430.2 903.8,431.8 893.7,433.2" fill="#00d060"/>
<polygon points="899.2,430.2 902.5,429.8 907.2,431.3 903.8,431.8" fill="#000"/>
<polygon points="902.5,429.8 919.5,427.4 924.1,428.9 907.2,431.3" fill="#ff3838"/>
<polygon points="919.5,427.4 922.9,426.9 927.5,428.4 924.1,428.9" fill="#30f0f0"/>
<polygon points="922.9,426.9 933.0,425.5 937.7,427.0 927.5,428.4" fill="#000"/>
<polygon points="933.0,425.5 943.2,424.0 947.8,425.5 937.7,427.0" fill="#00d060"/>
<polygon points="943.2,424.0 956.7,422.1 961.4,423.6 947.8,425.5" fill="#000"/>
<polygon points="955.7,421.8 962.2,423.9 962.2,427.4 955.7,425.3" fill="#81746f"/>
<polygon points="903.0,436.2 911.3,435.0 916.4,436.7 908.1,437.8" fill="#ff3838"/>
<polygon points="911.3,435.0 916.8,434.2 921.9,435.9 916.4,436.7" fill="#ffffff"/>
<polygon points="916.8,434.2 930.6,432.3 935.7,433.9 921.9,435.9" fill="#ff3838"/>
<polygon points="930.6,432.3 944.4,430.4 949.5,432.0 935.7,433.9" fill="#000"/>
<polygon points="944.4,430.4 956.8,428.6 961.9,430.2 949.5,432.0" fill="#00d060"/>
<polygon points="956.8,428.6 972.0,426.5 977.1,428.1 961.9,430.2" fill="#000"/>
<polygon points="971.0,426.1 978.0,428.4 978.0,431.9 971.0,429.6" fill="#81746f"/>
<polygon points="915.0,440.1 922.0,439.1 926.2,440.5 919.2,441.4" fill="#ff3838"/>
<polygon points="925.5,438.6 935.9,437.1 940.2,438.5 929.7,440.0" fill="#ffc0f0"/>
<polygon points="935.9,437.1 949.9,435.1 954.1,436.5 940.2,438.5" fill="#ffffff"/>
<polygon points="949.9,435.1 963.9,433.2 968.1,434.5 954.1,436.5" fill="#ff3838"/>
<polygon points="963.9,433.2 977.8,431.2 982.1,432.6 968.1,434.5" fill="#30f0f0"/>
<polygon points="977.8,431.2 984.8,430.2 989.0,431.6 982.1,432.6" fill="#ffe000"/>
<polygon points="983.8,429.9 989.8,431.8 989.8,435.3 983.8,433.4" fill="#81746f"/>
<polygon points="927.0,443.9 933.2,443.1 938.3,444.7 932.1,445.6" fill="#000"/>
<polygon points="933.2,443.1 945.5,441.3 950.6,443.0 938.3,444.7" fill="#ff3838"/>
<polygon points="945.5,441.3 957.9,439.6 963.0,441.2 950.6,443.0" fill="#30f0f0"/>
<polygon points="957.9,439.6 965.3,438.5 970.4,440.2 963.0,441.2" fill="#30f0f0"/>
<polygon points="965.3,438.5 970.2,437.9 975.3,439.5 970.4,440.2" fill="#ffe000"/>
<polygon points="970.2,437.9 988.7,435.2 993.8,436.9 975.3,439.5" fill="#000"/>
<polygon points="987.7,434.9 994.7,437.2 994.7,440.7 987.7,438.4" fill="#81746f"/>
<polygon points="940.0,448.1 961.8,445.1 966.1,446.4 944.2,449.5" fill="#ffffff"/>
<polygon points="961.8,445.1 976.3,443.0 980.6,444.4 966.1,446.4" fill="#ffc0c0"/>
<polygon points="976.3,443.0 998.2,439.9 1002.4,441.3 980.6,444.4" fill="#00d060"/>
<polygon points="998.2,439.9 1012.7,437.9 1016.9,439.3 1002.4,441.3" fill="#000"/>
<polygon points="1011.7,437.6 1017.7,439.5 1017.7,443.0 1011.7,441.1" fill="#81746f"/>
<polygon points="963.0,450.9 972.2,449.6 977.3,451.3 968.1,452.6" fill="#ff3838"/>
<polygon points="972.2,449.6 981.3,448.3 986.4,450.0 977.3,451.3" fill="#000"/>
<polygon points="981.3,448.3 990.5,447.0 995.6,448.7 986.4,450.0" fill="#00d060"/>
<polygon points="990.5,447.0 999.7,445.8 1004.8,447.4 995.6,448.7" fill="#2040ff"/>
<polygon points="999.7,445.8 1011.9,444.0 1017.0,445.7 1004.8,447.4" fill="#00d060"/>
<polygon points="1011.9,444.0 1024.1,442.3 1029.2,443.9 1017.0,445.7" fill="#000"/>
<polygon points="1023.1,442.0 1030.1,444.2 1030.1,447.7 1023.1,445.5" fill="#81746f"/>
<polygon points="981.0,456.7 993.5,455.0 998.6,456.6 986.1,458.4" fill="#30f0f0"/>
<polygon points="993.5,455.0 1002.8,453.7 1007.9,455.3 998.6,456.6" fill="#ff3838"/>
<polygon points="1002.8,453.7 1018.4,451.5 1023.5,453.1 1007.9,455.3" fill="#000"/>
<polygon points="1018.4,451.5 1030.9,449.7 1036.0,451.3 1023.5,453.1" fill="#00d060"/>
<polygon points="1030.9,449.7 1043.4,447.9 1048.5,449.6 1036.0,451.3" fill="#000"/>
<polygon points="1042.4,447.6 1049.4,449.9 1049.4,453.4 1042.4,451.1" fill="#81746f"/>
<polygon points="996.0,461.6 1008.3,459.8 1013.4,461.5 1001.1,463.2" fill="#ff3838"/>
<polygon points="1008.3,459.8 1020.5,458.1 1025.6,459.8 1013.4,461.5" fill="#000"/>
<polygon points="1020.5,458.1 1032.8,456.4 1037.9,458.0 1025.6,459.8" fill="#00d060"/>
<polygon points="1032.8,456.4 1045.1,454.7 1050.2,456.3 1037.9,458.0" fill="#2040ff"/>
<polygon points="1045.1,454.7 1057.4,452.9 1062.5,454.6 1050.2,456.3" fill="#000"/>
<polygon points="1056.4,452.6 1063.4,454.9 1063.4,458.4 1056.4,456.1" fill="#81746f"/>
<polygon points="1009.0,465.8 1025.8,463.4 1030.1,464.8 1013.2,467.1" fill="#ff3838"/>
<polygon points="1025.8,463.4 1037.1,461.8 1041.3,463.2 1030.1,464.8" fill="#000"/>
<polygon points="1037.1,461.8 1053.9,459.4 1058.1,460.8 1041.3,463.2" fill="#00d060"/>
<polygon points="1053.9,459.4 1065.1,457.9 1069.4,459.2 1058.1,460.8" fill="#000"/>
<polygon points="1064.1,457.5 1070.1,459.5 1070.1,463.0 1064.1,461.0" fill="#81746f"/>
<polygon points="862.0,389.1 871.0,392.0 871.0,396.0 862.0,393.1" fill="#81746f"/>
<polygon points="771.0,401.9 780.0,404.8 780.0,408.8 771.0,405.9" fill="#81746f"/>
<polygon points="875.0,393.3 884.0,396.2 884.0,400.2 875.0,397.3" fill="#81746f"/>
<polygon points="784.0,406.1 793.0,409.0 793.0,413.0 784.0,410.1" fill="#81746f"/>
<polygon points="888.0,397.5 897.0,400.4 897.0,404.4 888.0,401.5" fill="#81746f"/>
<polygon points="797.0,410.3 806.0,413.2 806.0,417.2 797.0,414.3" fill="#81746f"/>
<polygon points="901.0,401.7 910.0,404.6 910.0,408.6 901.0,405.7" fill="#81746f"/>
<polygon points="810.0,414.5 819.0,417.4 819.0,421.4 810.0,418.5" fill="#81746f"/>
<polygon points="914.0,405.9 923.0,408.8 923.0,412.8 914.0,409.9" fill="#81746f"/>
<polygon points="823.0,418.7 832.0,421.6 832.0,425.6 823.0,422.7" fill="#81746f"/>
<polygon points="927.0,410.1 936.0,413.0 936.0,417.0 927.0,414.1" fill="#81746f"/>
<polygon points="836.0,422.9 845.0,425.8 845.0,429.8 836.0,426.9" fill="#81746f"/>
<polygon points="940.0,414.3 949.0,417.2 949.0,421.2 940.0,418.3" fill="#81746f"/>
<polygon points="849.0,427.1 858.0,430.0 858.0,434.0 849.0,431.1" fill="#81746f"/>
<polygon points="862.0,431.3 871.0,434.2 871.0,438.2 862.0,435.3" fill="#81746f"/>
<polygon points="966.0,422.7 975.0,425.6 975.0,429.6 966.0,426.7" fill="#81746f"/>
<polygon points="875.0,435.5 884.0,438.4 884.0,442.4 875.0,439.5" fill="#81746f"/>
<polygon points="979.0,426.9 988.0,429.8 988.0,433.8 979.0,430.9" fill="#81746f"/>
<polygon points="888.0,439.7 897.0,442.6 897.0,446.6 888.0,443.7" fill="#81746f"/>
<polygon points="992.0,431.1 1001.0,434.0 1001.0,438.0 992.0,435.1" fill="#81746f"/>
<polygon points="914.0,448.1 923.0,451.0 923.0,455.0 914.0,452.1" fill="#81746f"/>
<polygon points="1018.0,439.5 1027.0,442.4 1027.0,446.4 1018.0,443.5" fill="#81746f"/>
<polygon points="1031.0,443.7 1040.0,446.6 1040.0,450.6 1031.0,447.7" fill="#81746f"/>
<polygon points="1044.0,447.8 1053.0,450.8 1053.0,454.8 1044.0,451.8" fill="#81746f"/>
<polygon points="1057.0,452.0 1066.0,454.9 1066.0,458.9 1057.0,456.0" fill="#81746f"/>
<polygon points="1070.0,456.2 1079.0,459.1 1079.0,463.1 1070.0,460.2" fill="#81746f"/>
<polygon points="779.0,402.7 789.0,401.3 795.0,403.2 785.0,404.6" fill="#000"/>
<polygon points="789.0,401.3 789.0,404.0 795.0,403.2" fill="#81746f"/>
<polygon points="771.0,408.9 783.0,407.2 790.0,409.5 778.0,411.2" fill="#000"/>
<polygon points="783.0,407.2 783.0,410.2 783.5,410.4 790.0,409.5" fill="#81746f"/>
<polygon points="784.0,413.1 796.0,411.4 803.0,413.7 791.0,415.4" fill="#000"/>
<polygon points="796.0,411.4 796.0,414.4 796.5,414.6 803.0,413.7" fill="#81746f"/>
<polygon points="805.0,411.1 815.0,409.6 821.0,411.6 811.0,413.0" fill="#000"/>
<polygon points="815.0,409.6 815.0,412.4 821.0,411.6" fill="#81746f"/>
<polygon points="797.0,417.3 809.0,415.6 816.0,417.9 804.0,419.5" fill="#000"/>
<polygon points="809.0,415.6 809.0,418.6 809.5,418.8 816.0,417.9" fill="#81746f"/>
<polygon points="818.0,415.3 828.0,413.8 834.0,415.8 824.0,417.2" fill="#000"/>
<polygon points="828.0,413.8 828.0,416.6 834.0,415.8" fill="#81746f"/>
<polygon points="810.0,421.5 822.0,419.8 829.0,422.1 817.0,423.7" fill="#000"/>
<polygon points="822.0,419.8 822.0,422.8 822.5,423.0 829.0,422.1" fill="#81746f"/>
<polygon points="836.0,429.9 848.0,428.2 855.0,430.4 843.0,432.1" fill="#000"/>
<polygon points="848.0,428.2 848.0,431.2 848.5,431.4 855.0,430.4" fill="#81746f"/>
<polygon points="857.0,427.8 867.0,426.4 873.0,428.4 863.0,429.8" fill="#000"/>
<polygon points="867.0,426.4 867.0,429.2 873.0,428.4" fill="#81746f"/>
<polygon points="849.0,434.1 861.0,432.4 868.0,434.6 856.0,436.3" fill="#000"/>
<polygon points="861.0,432.4 861.0,435.4 861.5,435.6 868.0,434.6" fill="#81746f"/>
<polygon points="862.0,438.3 874.0,436.6 881.0,438.8 869.0,440.5" fill="#000"/>
<polygon points="874.0,436.6 874.0,439.6 874.5,439.8 881.0,438.8" fill="#81746f"/>
<polygon points="875.0,442.5 887.0,440.8 894.0,443.0 882.0,444.7" fill="#000"/>
<polygon points="887.0,440.8 887.0,443.8 887.5,443.9 894.0,443.0" fill="#81746f"/>
<polygon points="896.0,440.4 906.0,439.0 912.0,441.0 902.0,442.4" fill="#000"/>
<polygon points="906.0,439.0 906.0,441.8 912.0,441.0" fill="#81746f"/>
<polygon points="1093.5,458.0 1096.7,459.0 1096.7,503.0 1093.5,502.0" fill="#81746f"/>
<polygon points="1096.7,459.0 1102.5,458.2 1102.5,502.2 1096.7,503.0" fill="#f3e3dd"/>
<polygon points="1166.0,542.0 1169.2,543.0 1169.2,587.0 1166.0,586.0" fill="#81746f"/>
<polygon points="1169.2,543.0 1175.0,542.2 1175.0,586.2 1169.2,587.0" fill="#f3e3dd"/>
<polygon points="1276.0,527.0 1279.2,528.0 1279.2,572.0 1276.0,571.0" fill="#81746f"/>
<polygon points="1279.2,528.0 1285.0,527.2 1285.0,571.2 1279.2,572.0" fill="#f3e3dd"/>
<polygon points="1085.0,553.0 1088.2,554.0 1088.2,598.0 1085.0,597.0" fill="#81746f"/>
<polygon points="1088.2,554.0 1094.0,553.2 1094.0,597.2 1088.2,598.0" fill="#f3e3dd"/>
<polygon points="1001.0,472.5 1024.0,469.2 1024.0,473.2 1001.0,476.5" fill="#f3e3dd"/>
<polygon points="1024.0,469.2 1071.0,484.4 1071.0,488.4 1024.0,473.2" fill="#81746f"/>
<polygon points="1071.0,484.4 1048.0,487.6 1048.0,491.6 1071.0,488.4" fill="#f3e3dd"/>
<polygon points="1048.0,487.6 1001.0,472.5 1001.0,476.5 1048.0,491.6" fill="#81746f"/>
<polygon points="1001.0,472.5 1024.0,469.2 1071.0,484.4 1048.0,487.6" fill="#f4e4de"/>
<polygon points="1015.0,474.2 1026.0,472.7 1056.0,482.3 1045.0,483.9" fill="#000"/>
<polygon points="1026.0,472.7 1026.0,476.7 1047.4,483.6 1056.0,482.3" fill="#81746f"/>
<polygon points="1027.0,533.3 1037.0,536.5 1037.0,544.5 1027.0,541.3" fill="#c82828"/>
<polygon points="1037.0,536.5 1077.0,530.8 1077.0,538.8 1037.0,544.5" fill="#ff3c3c"/>
<polygon points="1027.0,533.3 1067.0,527.6 1077.0,530.8 1037.0,536.5" fill="#ff3c3c"/>
<polygon points="1103.0,548.5 1113.0,551.7 1113.0,559.7 1103.0,556.5" fill="#c82828"/>
<polygon points="1113.0,551.7 1163.0,544.7 1163.0,552.7 1113.0,559.7" fill="#ff3c3c"/>
<polygon points="1103.0,548.5 1153.0,541.5 1163.0,544.7 1113.0,551.7" fill="#ff3c3c"/>
<polygon points="1147.0,551.4 1157.0,554.7 1157.0,561.7 1147.0,558.4" fill="#c82828"/>
<polygon points="1157.0,554.7 1209.0,547.3 1209.0,554.3 1157.0,561.7" fill="#e83030"/>
<polygon points="1147.0,551.4 1199.0,544.1 1209.0,547.3 1157.0,554.7" fill="#ff3c3c"/>
<polygon points="1003.0,518.9 1048.0,512.5 1056.0,515.1 1011.0,521.4" fill="#5fb4b8"/>
<polygon points="1083.0,530.8 1123.0,525.1 1131.0,527.7 1091.0,533.4" fill="#5fb4b8"/>
<polygon points="1006.0,526.8 1051.0,520.4 1058.0,522.7 1013.0,529.1" fill="#00c466"/>
<polygon points="1083.0,540.1 1133.0,533.0 1140.0,535.3 1090.0,542.3" fill="#00c466"/>
<polygon points="975.0,523.7 995.0,520.9 1001.0,522.9 981.0,525.7" fill="#00c466"/>
<polygon points="1030.0,556.0 1036.0,558.0 1036.0,596.0 1030.0,594.0" fill="#3f9498"/>
<polygon points="1036.0,558.0 1042.0,557.1 1042.0,595.1 1036.0,596.0" fill="#5fb4b8"/>
<polygon points="1030.0,556.0 1036.0,555.2 1042.0,557.1 1036.0,558.0" fill="#5fb4b8"/>
<polygon points="935.0,506.8 1091.0,557.2 1091.0,563.2 935.0,512.8" fill="#81746f"/>
<polygon points="1091.0,557.2 1096.5,556.4 1096.5,562.4 1091.0,563.2" fill="#f3e3dd"/>
<polygon points="965.0,502.6 1121.0,553.0 1121.0,559.0 965.0,508.6" fill="#81746f"/>
<polygon points="1121.0,553.0 1126.5,552.2 1126.5,558.2 1121.0,559.0" fill="#f3e3dd"/>
<polygon points="995.0,498.4 1151.0,548.7 1151.0,554.7 995.0,504.4" fill="#81746f"/>
<polygon points="1151.0,548.7 1156.5,547.9 1156.5,553.9 1151.0,554.7" fill="#f3e3dd"/>
<polygon points="1027.0,493.9 1183.0,544.2 1183.0,550.2 1027.0,499.9" fill="#81746f"/>
<polygon points="1183.0,544.2 1188.5,543.4 1188.5,549.4 1183.0,550.2" fill="#f3e3dd"/>
<polygon points="1053.0,490.2 1209.0,540.5 1209.0,546.5 1053.0,496.2" fill="#81746f"/>
<polygon points="1209.0,540.5 1214.5,539.8 1214.5,545.8 1209.0,546.5" fill="#f3e3dd"/>
<polygon points="941.0,508.8 1081.0,489.0 1081.0,493.0 941.0,512.8" fill="#f3e3dd"/>
<polygon points="935.0,506.8 941.0,508.8 941.0,512.8 935.0,510.8" fill="#81746f"/>
<polygon points="991.0,524.9 1131.0,505.2 1131.0,509.2 991.0,528.9" fill="#f3e3dd"/>
<polygon points="985.0,523.0 991.0,524.9 991.0,528.9 985.0,527.0" fill="#81746f"/>
<polygon points="1043.0,541.7 1183.0,521.9 1183.0,525.9 1043.0,545.7" fill="#f3e3dd"/>
<polygon points="1037.0,539.8 1043.0,541.7 1043.0,545.7 1037.0,543.8" fill="#81746f"/>
<polygon points="1091.0,557.2 1231.0,537.4 1231.0,541.4 1091.0,561.2" fill="#f3e3dd"/>
<polygon points="1085.0,555.3 1091.0,557.2 1091.0,561.2 1085.0,559.3" fill="#81746f"/>
<polygon points="1075.0,524.2 1155.0,512.9 1155.0,516.9 1075.0,528.2" fill="#f3e3dd"/>
<polygon points="1070.0,522.6 1075.0,524.2 1075.0,528.2 1070.0,526.6" fill="#81746f"/>
<polygon points="1065.0,548.8 1125.0,540.3 1125.0,544.3 1065.0,552.8" fill="#f3e3dd"/>
<polygon points="1060.0,547.2 1065.0,548.8 1065.0,552.8 1060.0,551.2" fill="#81746f"/>
<polygon points="1057.0,503.5 1105.0,496.8 1105.0,500.8 1057.0,507.5" fill="#f3e3dd"/>
<polygon points="1052.0,501.9 1057.0,503.5 1057.0,507.5 1052.0,505.9" fill="#81746f"/>
<polygon points="935.0,506.8 940.5,506.1 1096.5,556.4 1091.0,557.2" fill="#f4e4de"/>
<polygon points="965.0,502.6 970.5,501.8 1126.5,552.2 1121.0,553.0" fill="#f4e4de"/>
<polygon points="995.0,498.4 1000.5,497.6 1156.5,547.9 1151.0,548.7" fill="#f4e4de"/>
<polygon points="1027.0,493.9 1032.5,493.1 1188.5,543.4 1183.0,544.2" fill="#f4e4de"/>
<polygon points="1053.0,490.2 1058.5,489.4 1214.5,539.8 1209.0,540.5" fill="#f4e4de"/>
<polygon points="935.0,506.8 1075.0,487.1 1081.0,489.0 941.0,508.8" fill="#f4e4de"/>
<polygon points="985.0,523.0 1125.0,503.2 1131.0,505.2 991.0,524.9" fill="#f4e4de"/>
<polygon points="1037.0,539.8 1177.0,520.0 1183.0,521.9 1043.0,541.7" fill="#f4e4de"/>
<polygon points="1085.0,555.3 1225.0,535.5 1231.0,537.4 1091.0,557.2" fill="#f4e4de"/>
<polygon points="1070.0,522.6 1150.0,511.3 1155.0,512.9 1075.0,524.2" fill="#f4e4de"/>
<polygon points="1060.0,547.2 1120.0,538.7 1125.0,540.3 1065.0,548.8" fill="#f4e4de"/>
<polygon points="1052.0,501.9 1100.0,495.2 1105.0,496.8 1057.0,503.5" fill="#f4e4de"/>
<polygon points="1100.0,491.2 1135.0,486.3 1139.0,487.5 1104.0,492.5" fill="#00c060"/>
<polygon points="1127.0,497.6 1167.0,491.9 1171.0,493.2 1131.0,498.9" fill="#ff3c3c"/>
<polygon points="1165.0,504.3 1208.0,498.2 1212.0,499.5 1169.0,505.6" fill="#ff20e0"/>
<polygon points="1165.0,514.5 1205.0,508.8 1209.0,510.1 1169.0,515.8" fill="#ffe000"/>
<polygon points="1207.0,509.5 1229.0,506.4 1233.0,507.7 1211.0,510.8" fill="#ff3c3c"/>
<polygon points="1195.0,521.9 1240.0,515.5 1244.0,516.8 1199.0,523.1" fill="#00c060"/>
<polygon points="1211.0,530.3 1253.0,524.3 1257.0,525.6 1215.0,531.6" fill="#ff3c3c"/>
<polygon points="1257.0,525.6 1275.0,523.1 1279.0,524.4 1261.0,526.9" fill="#20e0f0"/>
<polygon points="1068.0,484.8 1231.0,537.4 1231.0,543.4 1068.0,490.8" fill="#81746f"/>
<polygon points="1231.0,537.4 1237.0,536.6 1237.0,542.6 1231.0,543.4" fill="#f3e3dd"/>
<polygon points="1094.0,481.2 1257.0,533.8 1257.0,539.8 1094.0,487.2" fill="#81746f"/>
<polygon points="1257.0,533.8 1263.0,532.9 1263.0,538.9 1257.0,539.8" fill="#f3e3dd"/>
<polygon points="1120.0,477.5 1283.0,530.1 1283.0,536.1 1120.0,483.5" fill="#81746f"/>
<polygon points="1283.0,530.1 1289.0,529.3 1289.0,535.3 1283.0,536.1" fill="#f3e3dd"/>
<polygon points="1147.0,473.7 1226.0,499.2 1226.0,505.2 1147.0,479.7" fill="#81746f"/>
<polygon points="1226.0,499.2 1232.0,498.3 1232.0,504.3 1226.0,505.2" fill="#f3e3dd"/>
<polygon points="1213.0,501.0 1297.0,528.1 1297.0,534.1 1213.0,507.0" fill="#81746f"/>
<polygon points="1297.0,528.1 1303.0,527.3 1303.0,533.3 1297.0,534.1" fill="#f3e3dd"/>
<polygon points="1075.0,487.1 1160.0,475.1 1160.0,479.1 1075.0,491.1" fill="#f3e3dd"/>
<polygon points="1068.0,484.8 1075.0,487.1 1075.0,491.1 1068.0,488.8" fill="#81746f"/>
<polygon points="1098.0,494.5 1183.0,482.5 1183.0,486.5 1098.0,498.5" fill="#f3e3dd"/>
<polygon points="1091.0,492.2 1098.0,494.5 1098.0,498.5 1091.0,496.2" fill="#81746f"/>
<polygon points="1121.0,501.9 1206.0,489.9 1206.0,493.9 1121.0,505.9" fill="#f3e3dd"/>
<polygon points="1114.0,499.7 1121.0,501.9 1121.0,505.9 1114.0,503.7" fill="#81746f"/>
<polygon points="1144.0,509.4 1229.0,497.4 1229.0,501.4 1144.0,513.4" fill="#f3e3dd"/>
<polygon points="1137.0,507.1 1144.0,509.4 1144.0,513.4 1137.0,511.1" fill="#81746f"/>
<polygon points="1167.0,516.8 1239.0,506.6 1239.0,510.6 1167.0,520.8" fill="#f3e3dd"/>
<polygon points="1160.0,514.5 1167.0,516.8 1167.0,520.8 1160.0,518.5" fill="#81746f"/>
<polygon points="1190.0,524.2 1262.0,514.0 1262.0,518.0 1190.0,528.2" fill="#f3e3dd"/>
<polygon points="1183.0,521.9 1190.0,524.2 1190.0,528.2 1183.0,525.9" fill="#81746f"/>
<polygon points="1213.0,531.6 1285.0,521.5 1285.0,525.5 1213.0,535.6" fill="#f3e3dd"/>
<polygon points="1206.0,529.4 1213.0,531.6 1213.0,535.6 1206.0,533.4" fill="#81746f"/>
<polygon points="1231.0,537.4 1303.0,527.3 1303.0,531.3 1231.0,541.4" fill="#f3e3dd"/>
<polygon points="1224.0,535.2 1231.0,537.4 1231.0,541.4 1224.0,539.2" fill="#81746f"/>
<polygon points="1068.0,484.8 1074.0,484.0 1237.0,536.6 1231.0,537.4" fill="#f4e4de"/>
<polygon points="1094.0,481.2 1100.0,480.3 1263.0,532.9 1257.0,533.8" fill="#f4e4de"/>
<polygon points="1120.0,477.5 1126.0,476.6 1289.0,529.3 1283.0,530.1" fill="#f4e4de"/>
<polygon points="1147.0,473.7 1153.0,472.8 1232.0,498.3 1226.0,499.2" fill="#f4e4de"/>
<polygon points="1213.0,501.0 1219.0,500.2 1303.0,527.3 1297.0,528.1" fill="#f4e4de"/>
<polygon points="1068.0,484.8 1153.0,472.8 1160.0,475.1 1075.0,487.1" fill="#f4e4de"/>
<polygon points="1091.0,492.2 1176.0,480.3 1183.0,482.5 1098.0,494.5" fill="#f4e4de"/>
<polygon points="1114.0,499.7 1199.0,487.7 1206.0,489.9 1121.0,501.9" fill="#f4e4de"/>
<polygon points="1137.0,507.1 1222.0,495.1 1229.0,497.4 1144.0,509.4" fill="#f4e4de"/>
<polygon points="1160.0,514.5 1232.0,504.4 1239.0,506.6 1167.0,516.8" fill="#f4e4de"/>
<polygon points="1183.0,521.9 1255.0,511.8 1262.0,514.0 1190.0,524.2" fill="#f4e4de"/>
<polygon points="1206.0,529.4 1278.0,519.2 1285.0,521.5 1213.0,531.6" fill="#f4e4de"/>
<polygon points="1224.0,535.2 1296.0,525.0 1303.0,527.3 1231.0,537.4" fill="#f4e4de"/>
<polygon points="1230.0,497.7 1232.0,498.3 1231.0,504.0 1219.0,500.2" fill="#f4e4de"/>
<polyline points="1245.0,545.3 1257.0,543.8" fill="none" stroke="#00b050" stroke-width="3"/>
<polyline points="1263.0,542.8 1275.0,541.3" fill="none" stroke="#00b050" stroke-width="3"/>
<polyline points="1285.0,539.7 1297.0,538.2" fill="none" stroke="#00b050" stroke-width="3"/>
<polygon points="455.0,548.6 509.0,566.0 509.0,570.0 455.0,552.6" fill="#81746f"/>
<polygon points="509.0,566.0 514.0,565.3 514.0,569.3 509.0,570.0" fill="#f3e3dd"/>
<polygon points="455.0,548.6 460.0,547.9 514.0,565.3 509.0,566.0" fill="#f4e4de"/>
<polygon points="468.0,546.7 522.0,564.2 522.0,568.2 468.0,550.7" fill="#81746f"/>
<polygon points="522.0,564.2 527.0,563.5 527.0,567.5 522.0,568.2" fill="#f3e3dd"/>
<polygon points="468.0,546.7 473.0,546.0 527.0,563.5 522.0,564.2" fill="#f4e4de"/>
<polyline points="392.0,565.0 410.0,569.0" fill="none" stroke="#e08000" stroke-width="2"/>
<polyline points="400.0,570.0 420.0,573.0" fill="none" stroke="#00c060" stroke-width="2"/>
<polyline points="418.0,572.0 436.0,575.0" fill="none" stroke="#9060e0" stroke-width="2"/>
<polyline points="440.0,566.0 470.0,570.0" fill="none" stroke="#00c060" stroke-width="2"/>
<polyline points="452.0,574.0 476.0,577.0" fill="none" stroke="#9060e0" stroke-width="2"/>
<polygon points="475.0,551.3 477.8,552.2 477.8,576.2 475.0,575.3" fill="#81746f"/>
<polygon points="477.8,552.2 483.0,551.5 483.0,575.5 477.8,576.2" fill="#f3e3dd"/>
<polygon points="692.0,541.0 694.8,541.9 694.8,585.9 692.0,585.0" fill="#81746f"/>
<polygon points="694.8,541.9 700.0,541.2 700.0,585.2 694.8,585.9" fill="#f3e3dd"/>
<polygon points="776.0,531.6 779.1,532.6 779.1,576.6 776.0,575.6" fill="#81746f"/>
<polygon points="779.1,532.6 785.0,531.8 785.0,575.8 779.1,576.6" fill="#f3e3dd"/>
<polygon points="859.0,519.0 863.2,520.4 863.2,564.4 859.0,563.0" fill="#81746f"/>
<polygon points="863.2,520.4 871.0,519.3 871.0,563.3 863.2,564.4" fill="#f3e3dd"/>
<polygon points="985.0,520.5 989.2,521.9 989.2,565.9 985.0,564.5" fill="#81746f"/>
<polygon points="989.2,521.9 997.0,520.8 997.0,564.8 989.2,565.9" fill="#f3e3dd"/>
<polygon points="681.3,538.0 692.3,541.5 692.3,546.5 681.3,543.0" fill="#81746f"/>
<polygon points="692.3,541.5 698.3,540.7 698.3,545.7 692.3,546.5" fill="#f3e3dd"/>
<polygon points="681.3,538.0 687.3,537.2 698.3,540.7 692.3,541.5" fill="#f4e4de"/>
<polygon points="760.0,526.9 771.0,530.4 771.0,535.4 760.0,531.9" fill="#81746f"/>
<polygon points="771.0,530.4 777.5,529.5 777.5,534.5 771.0,535.4" fill="#f3e3dd"/>
<polygon points="760.0,526.9 766.5,526.0 777.5,529.5 771.0,530.4" fill="#f4e4de"/>
<polygon points="844.9,514.9 855.9,518.5 855.9,523.5 844.9,519.9" fill="#81746f"/>
<polygon points="855.9,518.5 863.9,517.3 863.9,522.3 855.9,523.5" fill="#f3e3dd"/>
<polygon points="844.9,514.9 852.9,513.8 863.9,517.3 855.9,518.5" fill="#f4e4de"/>
<polygon points="929.3,503.0 940.3,506.5 940.3,511.5 929.3,508.0" fill="#81746f"/>
<polygon points="940.3,506.5 948.3,505.4 948.3,510.4 940.3,511.5" fill="#f3e3dd"/>
<polygon points="929.3,503.0 937.3,501.9 948.3,505.4 940.3,506.5" fill="#f4e4de"/>
<polygon points="605.0,553.4 611.0,555.3 611.0,560.3 605.0,558.4" fill="#81746f"/>
<polygon points="611.0,555.3 946.0,508.1 946.0,513.1 611.0,560.3" fill="#f3e3dd"/>
<polygon points="605.0,553.4 940.0,506.1 946.0,508.1 611.0,555.3" fill="#f4e4de"/>
<polyline points="643.0,556.7 943.0,514.4" fill="none" stroke="#f0e020" stroke-width="1"/>
<polygon points="838.0,546.0 843.5,547.0 843.5,561.5 838.0,560.5" fill="#ff2020"/>
<polygon points="754.0,558.0 759.0,559.0 759.0,574.0 754.0,573.0" fill="#ff2020"/>
<polyline points="840.0,530.0 840.0,546.0" fill="none" stroke="#e8a0a0" stroke-width="1"/>
<polyline points="756.0,545.0 756.0,558.0" fill="none" stroke="#e8a0a0" stroke-width="1"/>
<polyline points="610.0,557.0 690.0,546.0" fill="none" stroke="#00b060" stroke-width="2"/>
<polyline points="760.0,541.0 800.0,535.0" fill="none" stroke="#00a080" stroke-width="2"/>
<polygon points="930.0,517.0 944.0,515.0 944.0,560.0 930.0,562.0" fill="#5fb4b8"/>
<polygon points="922.0,518.0 930.0,517.0 930.0,562.0 922.0,561.0" fill="#f3e3dd"/>
<polygon points="909.7,544.5 953.2,540.5 969.4,547.0 932.3,552.0" fill="#b4e6e4"/>
<polygon points="909.7,544.5 932.3,552.0 932.3,556.0 909.7,548.0" fill="#81746f"/>
<polygon points="932.3,552.0 969.4,547.0 969.4,551.5 932.3,556.0" fill="#f3e3dd"/>
<polygon points="909.7,548.0 913.0,549.0 913.0,556.0 909.7,555.0" fill="#f3e3dd"/>
<polygon points="966.0,551.0 969.4,551.0 969.4,557.0 966.0,557.0" fill="#f3e3dd"/>
<polygon points="930.0,556.0 935.0,556.0 935.0,563.0 930.0,563.0" fill="#f3e3dd"/>
<polygon points="945.0,516.7 955.0,519.9 955.0,526.9 945.0,523.7" fill="#009a52"/>
<polygon points="955.0,519.9 977.0,516.8 977.0,523.8 955.0,526.9" fill="#009a52"/>
<polygon points="945.0,516.7 967.0,513.6 977.0,516.8 955.0,519.9" fill="#00c466"/>
<polygon points="430.0,577.0 433.5,578.1 433.5,622.1 430.0,621.0" fill="#81746f"/>
<polygon points="433.5,578.1 440.0,577.2 440.0,621.2 433.5,622.1" fill="#f3e3dd"/>
<polygon points="448.0,582.0 450.8,582.9 450.8,626.9 448.0,626.0" fill="#81746f"/>
<polygon points="450.8,582.9 456.0,582.2 456.0,626.2 450.8,626.9" fill="#f3e3dd"/>
<polygon points="483.0,593.0 485.8,593.9 485.8,637.9 483.0,637.0" fill="#81746f"/>
<polygon points="485.8,593.9 491.0,593.2 491.0,637.2 485.8,637.9" fill="#f3e3dd"/>
<polygon points="533.0,611.0 535.8,611.9 535.8,655.9 533.0,655.0" fill="#81746f"/>
<polygon points="535.8,611.9 541.0,611.2 541.0,655.2 535.8,655.9" fill="#f3e3dd"/>
<polygon points="578.0,627.0 581.1,628.0 581.1,672.0 578.0,671.0" fill="#81746f"/>
<polygon points="581.1,628.0 587.0,627.2 587.0,671.2 581.1,672.0" fill="#f3e3dd"/>
<polygon points="603.0,602.0 605.1,602.7 605.1,646.7 603.0,646.0" fill="#81746f"/>
<polygon points="605.1,602.7 609.0,602.1 609.0,646.1 605.1,646.7" fill="#f3e3dd"/>
<polygon points="653.0,607.0 655.8,607.9 655.8,651.9 653.0,651.0" fill="#81746f"/>
<polygon points="655.8,607.9 661.0,607.2 661.0,651.2 655.8,651.9" fill="#f3e3dd"/>
<polygon points="748.0,595.0 751.5,596.1 751.5,640.1 748.0,639.0" fill="#81746f"/>
<polygon points="751.5,596.1 758.0,595.2 758.0,639.2 751.5,640.1" fill="#f3e3dd"/>
<polygon points="540.5,622.0 548.5,624.0 548.5,661.0 540.5,659.0" fill="#ff3a3a"/>
<polygon points="548.5,640.0 555.0,641.0 555.0,661.0 548.5,661.0" fill="#ff2020"/>
<polygon points="555.0,630.0 568.0,633.0 568.0,652.0 555.0,650.0" fill="#ff4444"/>
<polygon points="572.0,628.0 582.0,630.0 582.0,671.0 572.0,669.0" fill="#ffc800"/>
<polygon points="566.0,612.0 572.0,613.0 572.0,648.0 566.0,647.0" fill="#40e0ff"/>
<polygon points="590.0,634.0 600.0,632.0 600.0,660.0 590.0,662.0" fill="#60e8f0"/>
<polyline points="592.0,632.0 592.0,668.0" fill="none" stroke="#00a040" stroke-width="1.5"/>
<polyline points="596.0,632.0 596.0,664.0" fill="none" stroke="#2040ff" stroke-width="1.5"/>
<polygon points="728.0,628.0 744.0,632.0 744.0,640.0 728.0,636.0" fill="#e8b000"/>
<polygon points="728.0,636.0 744.0,640.0 744.0,637.0 728.0,633.0" fill="#c89000"/>
<polygon points="678.0,619.0 683.0,620.0 683.0,633.0 678.0,632.0" fill="#ff3c3c"/>
<polygon points="683.0,620.0 694.0,618.0 694.0,631.0 683.0,633.0" fill="#5fb4b8"/>
<polygon points="426.0,576.3 610.0,550.4 610.0,554.4 426.0,580.3" fill="#f3e3dd"/>
<polygon points="610.0,550.4 763.0,599.8 763.0,603.8 610.0,554.4" fill="#81746f"/>
<polygon points="763.0,599.8 643.0,616.7 643.0,620.7 763.0,603.8" fill="#f3e3dd"/>
<polygon points="643.0,616.7 656.0,620.9 656.0,624.9 643.0,620.7" fill="#81746f"/>
<polygon points="656.0,620.9 592.0,629.9 592.0,633.9 656.0,624.9" fill="#f3e3dd"/>
<polygon points="592.0,629.9 519.0,606.4 519.0,610.4 592.0,633.9" fill="#81746f"/>
<polygon points="519.0,606.4 514.0,607.1 514.0,611.1 519.0,610.4" fill="#f3e3dd"/>
<polygon points="514.0,607.1 476.0,594.8 476.0,598.8 514.0,611.1" fill="#81746f"/>
<polygon points="476.0,594.8 481.0,594.1 481.0,598.1 476.0,598.8" fill="#f3e3dd"/>
<polygon points="481.0,594.1 426.0,576.3 426.0,580.3 481.0,598.1" fill="#81746f"/>
<polygon points="426.0,576.3 610.0,550.4 763.0,599.8 643.0,616.7 656.0,620.9 592.0,629.9 519.0,606.4 514.0,607.1 476.0,594.8 481.0,594.1" fill="#f4e4de"/>
<polygon points="588.0,557.2 616.0,553.2 753.0,597.5 725.0,601.4" fill="#a7a3a2"/>
<polygon points="644.0,572.5 660.0,570.2 703.0,584.1 687.0,586.4" fill="#74d8d6"/>
<polygon points="661.0,578.0 677.0,575.7 703.0,584.1 687.0,586.4" fill="#5fc0c0"/>
<polygon points="588.0,557.2 591.0,556.8 728.0,601.0 725.0,601.4" fill="#8d8988"/>
<polygon points="608.0,562.3 633.0,558.7 639.0,560.7 614.0,564.2" fill="#8d8988"/>
<polygon points="686.0,587.4 711.0,583.9 717.0,585.8 692.0,589.4" fill="#8d8988"/>
<polygon points="558.0,561.4 588.0,557.2 597.0,560.1 567.0,564.3" fill="#a7a3a2"/>
<polygon points="563.0,562.1 589.0,558.4 593.0,559.7 567.0,563.4" fill="#c04040"/>
<polygon points="445.3,578.2 492.9,571.5 499.9,573.7 452.3,580.5" fill="#000"/>
<polygon points="445.3,578.2 492.9,571.5 499.9,573.7 452.3,580.5" fill="#28f0f0"/>
<polygon points="492.9,571.5 492.9,574.7 499.9,573.7" fill="#81746f"/>
<polygon points="462.0,583.2 506.8,576.9 513.8,579.2 469.0,585.5" fill="#000"/>
<polygon points="462.0,583.2 475.9,581.3 482.9,583.5 469.0,585.5" fill="#ff20e0"/>
<polygon points="475.9,581.3 482.3,580.4 489.3,582.6 482.9,583.5" fill="#00d060"/>
<polygon points="498.1,578.1 506.8,576.9 513.8,579.2 505.1,580.4" fill="#2040ff"/>
<polygon points="506.8,576.9 506.8,580.2 513.8,579.2" fill="#81746f"/>
<polygon points="479.9,589.2 508.8,585.1 516.8,587.7 487.9,591.8" fill="#000"/>
<polygon points="508.8,585.1 508.8,588.6 509.3,588.8 516.8,587.7" fill="#81746f"/>
<polygon points="511.3,593.0 546.4,588.0 556.4,591.2 521.3,596.2" fill="#000"/>
<polygon points="511.3,593.0 546.4,588.0 556.4,591.2 521.3,596.2" fill="#ff3c3c"/>
<polygon points="546.4,588.0 546.4,591.5 548.9,592.3 556.4,591.2" fill="#81746f"/>
<polygon points="493.5,594.3 511.6,591.7 518.6,594.0 500.5,596.5" fill="#000"/>
<polygon points="511.6,591.7 511.6,595.0 518.6,594.0" fill="#81746f"/>
<polygon points="515.8,600.6 563.3,593.9 571.3,596.5 523.8,603.2" fill="#000"/>
<polygon points="515.8,600.6 524.1,599.4 532.1,602.0 523.8,603.2" fill="#ff20e0"/>
<polygon points="524.1,599.4 533.8,598.1 541.8,600.7 532.1,602.0" fill="#00b050"/>
<polygon points="545.3,596.5 559.4,594.5 567.4,597.0 553.3,599.0" fill="#2040ff"/>
<polygon points="559.4,594.5 563.3,593.9 571.3,596.5 567.4,597.0" fill="#ff3030"/>
<polygon points="563.3,593.9 563.3,597.4 563.8,597.5 571.3,596.5" fill="#81746f"/>
<polygon points="530.2,605.1 557.4,601.3 563.4,603.2 536.2,607.1" fill="#000"/>
<polygon points="530.2,605.1 557.4,601.3 563.4,603.2 536.2,607.1" fill="#ff3c3c"/>
<polygon points="557.4,601.3 557.4,604.1 563.4,603.2" fill="#81746f"/>
<polygon points="518.8,569.3 561.7,563.3 566.7,564.9 523.8,570.9" fill="#000"/>
<polygon points="518.8,569.3 561.7,563.3 566.7,564.9 523.8,570.9" fill="#ff3c3c"/>
<polygon points="561.7,563.3 561.7,565.6 566.7,564.9" fill="#81746f"/>
<polygon points="526.4,573.2 568.8,567.3 576.8,569.8 534.4,575.8" fill="#000"/>
<polygon points="526.4,573.2 568.8,567.3 576.8,569.8 534.4,575.8" fill="#ffc800"/>
<polygon points="568.8,567.3 568.8,570.8 569.2,570.9 576.8,569.8" fill="#81746f"/>
<polygon points="549.2,579.2 571.2,576.1 578.2,578.4 556.2,581.5" fill="#000"/>
<polygon points="549.2,579.2 571.2,576.1 578.2,578.4 556.2,581.5" fill="#ffc800"/>
<polygon points="571.2,576.1 571.2,579.4 578.2,578.4" fill="#81746f"/>
<polygon points="576.8,575.2 584.5,574.1 592.5,576.7 584.8,577.8" fill="#000"/>
<polygon points="576.8,575.2 584.5,574.1 592.5,576.7 584.8,577.8" fill="#6020c0"/>
<polygon points="584.5,574.1 584.5,577.6 585.0,577.8 592.5,576.7" fill="#81746f"/>
<polygon points="560.8,585.8 590.2,581.6 597.2,583.9 567.8,588.0" fill="#000"/>
<polygon points="560.8,585.8 590.2,581.6 597.2,583.9 567.8,588.0" fill="#ffc800"/>
<polygon points="590.2,581.6 590.2,584.9 597.2,583.9" fill="#81746f"/>
<polygon points="579.2,591.1 626.7,584.4 633.7,586.6 586.2,593.4" fill="#000"/>
<polygon points="579.2,591.1 626.7,584.4 633.7,586.6 586.2,593.4" fill="#ff3c3c"/>
<polygon points="626.7,584.4 626.7,587.6 633.7,586.6" fill="#81746f"/>
<polygon points="603.9,595.8 644.0,590.2 651.0,592.4 610.9,598.1" fill="#000"/>
<polygon points="618.8,593.7 631.8,591.9 638.8,594.1 625.8,596.0" fill="#20e8f0"/>
<polygon points="631.8,591.9 641.0,590.6 648.0,592.8 638.8,594.1" fill="#ff3030"/>
<polygon points="644.0,590.2 644.0,593.4 651.0,592.4" fill="#81746f"/>
<polygon points="619.3,601.5 645.3,597.8 653.3,600.4 627.3,604.1" fill="#000"/>
<polygon points="619.3,601.5 645.3,597.8 653.3,600.4 627.3,604.1" fill="#ff20e0"/>
<polygon points="645.3,597.8 645.3,601.3 645.8,601.5 653.3,600.4" fill="#81746f"/>
<polygon points="563.2,609.2 585.9,606.0 594.9,608.9 572.2,612.1" fill="#000"/>
<polygon points="563.2,609.2 585.9,606.0 594.9,608.9 572.2,612.1" fill="#28f0f0"/>
<polygon points="585.9,606.0 585.9,609.5 587.3,610.0 594.9,608.9" fill="#81746f"/>
<polygon points="585.4,618.7 598.5,616.9 606.5,619.5 593.4,621.3" fill="#000"/>
<polygon points="585.4,618.7 598.5,616.9 606.5,619.5 593.4,621.3" fill="#28f0f0"/>
<polygon points="598.5,616.9 598.5,620.4 599.0,620.5 606.5,619.5" fill="#81746f"/>
<polygon points="546.6,612.8 561.9,610.6 567.9,612.5 552.6,614.7" fill="#000"/>
<polygon points="546.6,612.8 561.9,610.6 567.9,612.5 552.6,614.7" fill="#ff3c3c"/>
<polygon points="561.9,610.6 561.9,613.4 567.9,612.5" fill="#81746f"/>
<polygon points="561.8,584.3 588.9,580.5 596.9,583.1 569.8,586.9" fill="#000"/>
<polygon points="561.8,584.3 588.9,580.5 596.9,583.1 569.8,586.9" fill="#ffc800"/>
<polygon points="588.9,580.5 588.9,584.0 589.4,584.1 596.9,583.1" fill="#81746f"/>
<polygon points="606.4,596.5 643.7,591.2 650.7,593.5 613.4,598.8" fill="#000"/>
<polygon points="606.4,596.5 615.2,595.3 622.2,597.5 613.4,598.8" fill="#ff3030"/>
<polygon points="615.2,595.3 627.9,593.5 634.9,595.7 622.2,597.5" fill="#20e8f0"/>
<polygon points="627.9,593.5 632.2,592.9 639.2,595.1 634.9,595.7" fill="#00b050"/>
<polygon points="632.2,592.9 643.7,591.2 650.7,593.5 639.2,595.1" fill="#00b050"/>
<polygon points="643.7,591.2 643.7,594.5 650.7,593.5" fill="#81746f"/>
<polygon points="617.3,602.3 659.2,596.4 667.2,599.0 625.3,604.9" fill="#000"/>
<polygon points="617.3,602.3 659.2,596.4 667.2,599.0 625.3,604.9" fill="#ff20e0"/>
<polygon points="659.2,596.4 659.2,599.9 659.6,600.0 667.2,599.0" fill="#81746f"/>
<polygon points="632.1,608.0 663.8,603.6 671.8,606.2 640.1,610.6" fill="#000"/>
<polygon points="632.1,608.0 663.8,603.6 671.8,606.2 640.1,610.6" fill="#ff20e0"/>
<polygon points="663.8,603.6 663.8,607.1 664.2,607.2 671.8,606.2" fill="#81746f"/>
<polygon points="562.2,608.9 574.6,607.2 583.6,610.1 571.2,611.8" fill="#000"/>
<polygon points="562.2,608.9 574.6,607.2 583.6,610.1 571.2,611.8" fill="#28f0f0"/>
<polygon points="574.6,607.2 574.6,610.7 576.1,611.2 583.6,610.1" fill="#81746f"/>
<polygon points="585.9,606.4 596.1,604.9 605.1,607.8 594.9,609.3" fill="#000"/>
<polygon points="585.9,606.4 596.1,604.9 605.1,607.8 594.9,609.3" fill="#28f0f0"/>
<polygon points="596.1,604.9 596.1,608.4 597.5,608.9 605.1,607.8" fill="#81746f"/>
<polygon points="565.9,617.2 580.6,615.1 589.6,618.0 574.9,620.1" fill="#000"/>
<polygon points="565.9,617.2 580.6,615.1 589.6,618.0 574.9,620.1" fill="#28f0f0"/>
<polygon points="580.6,615.1 580.6,618.6 582.0,619.1 589.6,618.0" fill="#81746f"/>
<polygon points="655.1,609.8 678.3,606.5 684.3,608.4 661.1,611.7" fill="#000"/>
<polygon points="655.1,609.8 667.0,608.1 673.0,610.0 661.1,611.7" fill="#ff6060"/>
<polygon points="667.0,608.1 677.6,606.6 683.6,608.5 673.0,610.0" fill="#ff3030"/>
<polygon points="678.3,606.5 678.3,609.3 684.3,608.4" fill="#81746f"/>
<polygon points="598.9,618.7 623.2,615.3 629.2,617.2 604.9,620.7" fill="#000"/>
<polygon points="608.1,617.4 622.0,615.5 628.0,617.4 614.1,619.4" fill="#ffd000"/>
<polygon points="622.0,615.5 623.2,615.3 629.2,617.2 628.0,617.4" fill="#2040ff"/>
<polygon points="623.2,615.3 623.2,618.1 629.2,617.2" fill="#81746f"/>
<polygon points="719.7,604.0 722.5,605.0 722.5,649.5 719.7,648.5" fill="#81746f"/>
<polygon points="722.5,605.0 727.0,604.0 727.0,648.5 722.5,649.5" fill="#f3e3dd"/>
<polygon points="669.0,594.5 690.0,591.5 702.0,595.4 681.0,598.3" fill="#9a9594"/>
<polygon points="690.0,591.5 690.0,595.5 693.4,596.6 702.0,595.4" fill="#81746f"/>
<polygon points="686.0,600.0 707.0,597.0 720.0,601.2 699.0,604.2" fill="#8f8a89"/>
<polygon points="707.0,597.0 707.0,601.0 711.4,602.4 720.0,601.2" fill="#81746f"/>
<polygon points="657.0,602.7 678.0,599.7 688.0,602.9 667.0,605.9" fill="#000"/>
<polygon points="678.0,599.7 678.0,603.7 679.4,604.1 688.0,602.9" fill="#81746f"/>
<polygon points="589.0,564.9 602.0,563.1 627.0,571.2 614.0,573.0" fill="#9a9594"/>
<polygon points="602.0,563.1 602.0,567.1 618.4,572.4 627.0,571.2" fill="#81746f"/>
<polygon points="492.5,569.3 501.5,572.2 501.5,576.2 492.5,573.3" fill="#81746f"/>
<polygon points="511.5,574.0 520.5,576.9 520.5,580.9 511.5,578.0" fill="#81746f"/>
<polygon points="524.7,579.6 533.7,582.5 533.7,586.5 524.7,583.6" fill="#81746f"/>
<polygon points="575.5,594.7 584.5,597.6 584.5,601.6 575.5,598.7" fill="#81746f"/>
<polygon points="636.6,615.7 645.6,618.6 645.6,622.6 636.6,619.7" fill="#81746f"/>
<polygon points="530.0,564.0 539.0,566.9 539.0,570.9 530.0,568.0" fill="#81746f"/>
<polygon points="564.8,573.9 573.8,576.8 573.8,580.8 564.8,577.9" fill="#81746f"/>
<polygon points="613.1,589.4 622.1,592.3 622.1,596.3 613.1,593.4" fill="#81746f"/>
<polygon points="661.4,604.8 670.4,607.7 670.4,611.7 661.4,608.8" fill="#81746f"/>
<polygon points="675.7,610.2 684.7,613.1 684.7,617.1 675.7,614.2" fill="#81746f"/>
<polygon points="643.7,585.1 652.7,588.0 652.7,592.0 643.7,589.1" fill="#81746f"/>
<polygon points="463.0,582.7 507.0,576.5 512.0,578.1 468.0,584.3" fill="#000"/>
<polygon points="469.0,581.9 479.0,580.5 484.0,582.1 474.0,583.5" fill="#ff6060"/>
<polygon points="485.0,579.6 493.0,578.5 498.0,580.1 490.0,581.2" fill="#00b050"/>
<polygon points="507.0,576.5 507.0,578.8 512.0,578.1" fill="#81746f"/>
<polygon points="508.0,597.2 550.0,591.3 555.0,592.9 513.0,598.9" fill="#000"/>
<polygon points="514.0,596.4 524.0,595.0 529.0,596.6 519.0,598.0" fill="#ff6060"/>
<polygon points="530.0,594.1 538.0,593.0 543.0,594.6 535.0,595.7" fill="#ff20e0"/>
<polygon points="550.0,591.3 550.0,593.6 555.0,592.9" fill="#81746f"/>
<polygon points="558.0,613.4 590.0,608.9 595.0,610.5 563.0,615.0" fill="#000"/>
<polygon points="564.0,612.5 574.0,611.1 579.0,612.7 569.0,614.1" fill="#ff6060"/>
<polygon points="580.0,610.3 588.0,609.1 593.0,610.8 585.0,611.9" fill="#ffd000"/>
<polygon points="590.0,608.9 590.0,611.2 595.0,610.5" fill="#81746f"/>
<polygon points="541.0,581.0 567.0,577.3 572.0,578.9 546.0,582.6" fill="#000"/>
<polygon points="547.0,580.1 557.0,578.7 562.0,580.3 552.0,581.8" fill="#ff6060"/>
<polygon points="563.0,577.9 567.0,577.3 572.0,578.9 568.0,579.5" fill="#ff20e0"/>
<polygon points="567.0,577.3 567.0,579.6 572.0,578.9" fill="#81746f"/>
<polygon points="636.0,611.6 690.0,604.0 695.0,605.6 641.0,613.3" fill="#000"/>
<polygon points="642.0,610.8 652.0,609.4 657.0,611.0 647.0,612.4" fill="#00b050"/>
<polygon points="658.0,608.5 666.0,607.4 671.0,609.0 663.0,610.2" fill="#20e8f0"/>
<polygon points="690.0,604.0 690.0,606.3 695.0,605.6" fill="#81746f"/>
<polygon points="555.0,569.7 601.0,563.2 606.0,564.9 560.0,571.3" fill="#000"/>
<polygon points="561.0,568.9 571.0,567.5 576.0,569.1 566.0,570.5" fill="#ffffff"/>
<polygon points="577.0,566.6 585.0,565.5 590.0,567.1 582.0,568.2" fill="#ff3030"/>
<polygon points="601.0,563.2 601.0,565.6 606.0,564.9" fill="#81746f"/>
<polygon points="595.0,581.7 633.0,576.4 638.0,578.0 600.0,583.3" fill="#000"/>
<polygon points="601.0,580.9 611.0,579.5 616.0,581.1 606.0,582.5" fill="#ffffff"/>
<polygon points="617.0,578.6 625.0,577.5 630.0,579.1 622.0,580.2" fill="#00b050"/>
<polygon points="633.0,576.4 633.0,578.7 638.0,578.0" fill="#81746f"/>
<polygon points="659.0,601.4 703.0,595.2 708.0,596.9 664.0,603.1" fill="#000"/>
<polygon points="665.0,600.6 675.0,599.2 680.0,600.8 670.0,602.2" fill="#2040ff"/>
<polygon points="681.0,598.3 689.0,597.2 694.0,598.8 686.0,600.0" fill="#ff3030"/>
<polygon points="703.0,595.2 703.0,597.6 708.0,596.9" fill="#81746f"/>
<polygon points="600.0,621.4 636.0,616.3 641.0,617.9 605.0,623.0" fill="#000"/>
<polygon points="606.0,620.5 616.0,619.1 621.0,620.7 611.0,622.1" fill="#ff20e0"/>
<polygon points="622.0,618.3 630.0,617.1 635.0,618.7 627.0,619.9" fill="#ffffff"/>
<polygon points="636.0,616.3 636.0,618.6 641.0,617.9" fill="#81746f"/>
<polygon points="657.0,616.6 705.0,609.8 710.0,611.4 662.0,618.2" fill="#000"/>
<polygon points="663.0,615.7 673.0,614.3 678.0,615.9 668.0,617.3" fill="#ff3030"/>
<polygon points="679.0,613.5 687.0,612.3 692.0,614.0 684.0,615.1" fill="#ff20e0"/>
<polygon points="705.0,609.8 705.0,612.1 710.0,611.4" fill="#81746f"/>
<polygon points="835.6,589.5 838.0,590.3 838.0,634.3 835.6,633.5" fill="#81746f"/>
<polygon points="838.0,590.3 842.6,589.6 842.6,633.6 838.0,634.3" fill="#f3e3dd"/>
<polygon points="916.0,577.5 919.5,578.6 919.5,622.6 916.0,621.5" fill="#81746f"/>
<polygon points="919.5,578.6 926.0,577.7 926.0,621.7 919.5,622.6" fill="#f3e3dd"/>
<polygon points="1002.6,565.4 1006.1,566.5 1006.1,610.5 1002.6,609.4" fill="#81746f"/>
<polygon points="1006.1,566.5 1012.6,565.6 1012.6,609.6 1006.1,610.5" fill="#f3e3dd"/>
<polygon points="1085.0,553.0 1088.5,554.1 1088.5,598.1 1085.0,597.0" fill="#81746f"/>
<polygon points="1088.5,554.1 1095.0,553.2 1095.0,597.2 1088.5,598.1" fill="#f3e3dd"/>
<polygon points="822.6,585.8 833.6,589.3 833.6,593.8 822.6,590.3" fill="#81746f"/>
<polygon points="833.6,589.3 839.1,588.6 839.1,593.1 833.6,593.8" fill="#f3e3dd"/>
<polygon points="822.6,585.8 828.1,585.0 839.1,588.6 833.6,589.3" fill="#f4e4de"/>
<polygon points="904.4,574.2 915.4,577.8 915.4,582.3 904.4,578.7" fill="#81746f"/>
<polygon points="915.4,577.8 922.4,576.8 922.4,581.3 915.4,582.3" fill="#f3e3dd"/>
<polygon points="904.4,574.2 911.4,573.2 922.4,576.8 915.4,577.8" fill="#f4e4de"/>
<polygon points="990.8,562.1 1001.8,565.6 1001.8,570.1 990.8,566.6" fill="#81746f"/>
<polygon points="1001.8,565.6 1008.8,564.6 1008.8,569.1 1001.8,570.1" fill="#f3e3dd"/>
<polygon points="990.8,562.1 997.8,561.1 1008.8,564.6 1001.8,565.6" fill="#f4e4de"/>
<polygon points="1074.9,550.2 1085.9,553.7 1085.9,558.2 1074.9,554.7" fill="#81746f"/>
<polygon points="1085.9,553.7 1092.9,552.8 1092.9,557.3 1085.9,558.2" fill="#f3e3dd"/>
<polygon points="1074.9,550.2 1081.9,549.2 1092.9,552.8 1085.9,553.7" fill="#f4e4de"/>
<polygon points="761.0,599.1 765.5,600.6 765.5,604.1 761.0,602.6" fill="#81746f"/>
<polygon points="765.5,600.6 1095.5,554.0 1095.5,557.5 765.5,604.1" fill="#f3e3dd"/>
<polygon points="761.0,599.1 1091.0,552.6 1095.5,554.0 765.5,600.6" fill="#f4e4de"/>
<polyline points="771.0,605.3 1231.0,540.4" fill="none" stroke="#ffb0a0" stroke-width="1"/>
<polyline points="788.0,604.6 1008.0,573.5" fill="none" stroke="#f0e020" stroke-width="1"/>
<polygon points="866.0,600.5 870.0,598.0 1100.0,563.5 1164.0,554.0 1164.0,562.0 1100.0,570.5 870.0,606.5 866.0,606.0" fill="#fb3c3c"/>
<polygon points="783.0,601.0 842.0,622.0 842.0,630.0 783.0,609.0" fill="#f3e3dd"/>
<polygon points="780.0,607.0 800.0,611.0 826.0,625.0 806.0,624.0" fill="#c82828"/>
<polyline points="780.0,603.0 812.0,612.0" fill="none" stroke="#00b0a0" stroke-width="2"/>
<polyline points="55.0,463.0 806.0,357.0" fill="none" stroke="#1a8cdc" stroke-width="1"/>
<polyline points="55.0,507.0 806.0,401.0" fill="none" stroke="#1a8cdc" stroke-width="1"/>
<polyline points="806.0,357.0 1345.0,532.0" fill="none" stroke="#1a8cdc" stroke-width="1"/>
<polyline points="806.0,401.0 1345.0,576.0" fill="none" stroke="#1a8cdc" stroke-width="1"/>
<polyline points="1345.0,532.0 594.0,637.5" fill="none" stroke="#1a8cdc" stroke-width="1"/>
<polyline points="1345.0,576.0 594.0,681.5" fill="none" stroke="#1a8cdc" stroke-width="1"/>
<polyline points="594.0,637.5 55.0,463.0" fill="none" stroke="#1a8cdc" stroke-width="1"/>
<polyline points="594.0,681.5 55.0,507.0" fill="none" stroke="#1a8cdc" stroke-width="1"/>
<polyline points="55.0,463.0 55.0,507.0" fill="none" stroke="#1a8cdc" stroke-width="1"/>
<polyline points="806.0,357.0 806.0,401.0" fill="none" stroke="#1a8cdc" stroke-width="1"/>
<polyline points="1345.0,532.0 1345.0,576.0" fill="none" stroke="#1a8cdc" stroke-width="1"/>
<polyline points="594.0,637.5 594.0,681.5" fill="none" stroke="#1a8cdc" stroke-width="1"/>
</svg>
<div id="dlg">
 <div class="abs" id="tbar"></div>
 <svg class="abs" id="ico" viewBox="0 0 16 16"><rect width="16" height="16" rx="3" fill="#4d8bff"/><path d="M11.6 3.900C8.200 2.300 3.800 4.600 3.800 8.600c0 3 2.600 4.700 5 4.300 2.700-.4 3.900-3.100 2.800-5.100C10.500 5.900 7.400 6.300 6.700 8.500" fill="none" stroke="#fff" stroke-width="1.100" stroke-linecap="round"/><circle cx="8.800" cy="9.300" r="1.100" fill="#dce7ff"/></svg>
 <div class="abs" id="ttl">碰撞检测 1.0.0.2</div>
 <svg class="abs" id="back" viewBox="0 0 17 17"><circle cx="8.5" cy="8.5" r="8.5" fill="#0b62d0"/><path d="M9.800 5.600 6.900 8.500 9.800 11.400" fill="none" stroke="#fff" stroke-width="2" stroke-linecap="round" stroke-linejoin="round"/></svg>
 <svg class="abs" id="cls" viewBox="0 0 13 13"><path d="M1.500 1.500 11.500 11.500M11.500 1.500 1.500 11.500" stroke="#444" stroke-width="1.100" fill="none"/></svg>
 <div class="abs" id="list">
  <div class="abs" id="lhead"><div class="vsep" style="left:39px"></div><div class="vsep" style="left:115px"></div></div>
  <div class="cb" style="top:6px"><svg width="15" height="15" viewBox="0 0 15 15"><path d="M3.400 7.700 6.300 10.500 11.700 4.600" fill="none" stroke="#fff" stroke-width="1.300" stroke-linecap="round" stroke-linejoin="round"/></svg></div>
  <div class="lt" style="left:43px;top:7px;color:#111">碰撞物体类型</div>
  <div class="cb" style="top:29.4px"><svg width="15" height="15" viewBox="0 0 15 15"><path d="M3.400 7.700 6.300 10.500 11.700 4.600" fill="none" stroke="#fff" stroke-width="1.300" stroke-linecap="round" stroke-linejoin="round"/></svg></div>
  <div class="lt" style="top:28.9px">风管</div>
  <div class="cb" style="top:49.6px"><svg width="15" height="15" viewBox="0 0 15 15"><path d="M3.400 7.700 6.300 10.500 11.700 4.600" fill="none" stroke="#fff" stroke-width="1.300" stroke-linecap="round" stroke-linejoin="round"/></svg></div>
  <div class="lt" style="top:49.1px">风管管件</div>
  <div class="cb" style="top:69.8px"><svg width="15" height="15" viewBox="0 0 15 15"><path d="M3.400 7.700 6.300 10.500 11.700 4.600" fill="none" stroke="#fff" stroke-width="1.300" stroke-linecap="round" stroke-linejoin="round"/></svg></div>
  <div class="lt" style="top:69.3px">风管附件</div>
  <div class="cb" style="top:90.0px"><svg width="15" height="15" viewBox="0 0 15 15"><path d="M3.400 7.700 6.300 10.500 11.700 4.600" fill="none" stroke="#fff" stroke-width="1.300" stroke-linecap="round" stroke-linejoin="round"/></svg></div>
  <div class="lt" style="top:89.5px">机械设备</div>
  <div class="cb" style="top:110.2px"><svg width="15" height="15" viewBox="0 0 15 15"><path d="M3.400 7.700 6.300 10.500 11.700 4.600" fill="none" stroke="#fff" stroke-width="1.300" stroke-linecap="round" stroke-linejoin="round"/></svg></div>
  <div class="lt" style="top:109.7px">风道末端</div>
  <div class="cb" style="top:130.4px"><svg width="15" height="15" viewBox="0 0 15 15"><path d="M3.400 7.700 6.300 10.500 11.700 4.600" fill="none" stroke="#fff" stroke-width="1.300" stroke-linecap="round" stroke-linejoin="round"/></svg></div>
  <div class="lt" style="top:129.9px">电缆桥架</div>
  <div class="cb" style="top:150.6px"><svg width="15" height="15" viewBox="0 0 15 15"><path d="M3.400 7.700 6.300 10.500 11.700 4.600" fill="none" stroke="#fff" stroke-width="1.300" stroke-linecap="round" stroke-linejoin="round"/></svg></div>
  <div class="lt" style="top:150.1px;width:65px;overflow:hidden"><span style="margin-left:-4px">电缆桥架配件</span></div>
  <div class="cb" style="top:170.8px"><svg width="15" height="15" viewBox="0 0 15 15"><path d="M3.400 7.700 6.300 10.500 11.700 4.600" fill="none" stroke="#fff" stroke-width="1.300" stroke-linecap="round" stroke-linejoin="round"/></svg></div>
  <div class="lt" style="top:170.3px">管道</div>
  <div class="cb" style="top:191.0px"><svg width="15" height="15" viewBox="0 0 15 15"><path d="M3.400 7.700 6.300 10.500 11.700 4.600" fill="none" stroke="#fff" stroke-width="1.300" stroke-linecap="round" stroke-linejoin="round"/></svg></div>
  <div class="lt" style="top:190.5px">管件</div>
  <div class="cb" style="top:211.2px"><svg width="15" height="15" viewBox="0 0 15 15"><path d="M3.400 7.700 6.300 10.500 11.700 4.600" fill="none" stroke="#fff" stroke-width="1.300" stroke-linecap="round" stroke-linejoin="round"/></svg></div>
  <div class="lt" style="top:210.7px">管道附件</div>
  <div class="cb off" style="top:231.4px"></div>
  <div class="lt" style="top:230.9px">房间</div>
 </div>
 <div class="abs" id="pct">0%</div>
 <div class="rd" style="top:38px"></div><div class="rt" style="top:38px">显示选中类别和所有项目构件碰撞的结果</div>
 <div class="rd on" style="top:63px"><i></i></div><div class="rt" style="top:63px;color:#0b63c9">显示选中类别相互之间构件碰撞的结果</div>
 <div class="abs" id="res"><div class="abs" id="rhead"><span>碰撞物体</span><div class="vsep" style="left:52px"></div></div></div>
 <div class="abs" id="btn">修改完成，从列表中移除该项结果</div>
</div>
</body>
</html>
